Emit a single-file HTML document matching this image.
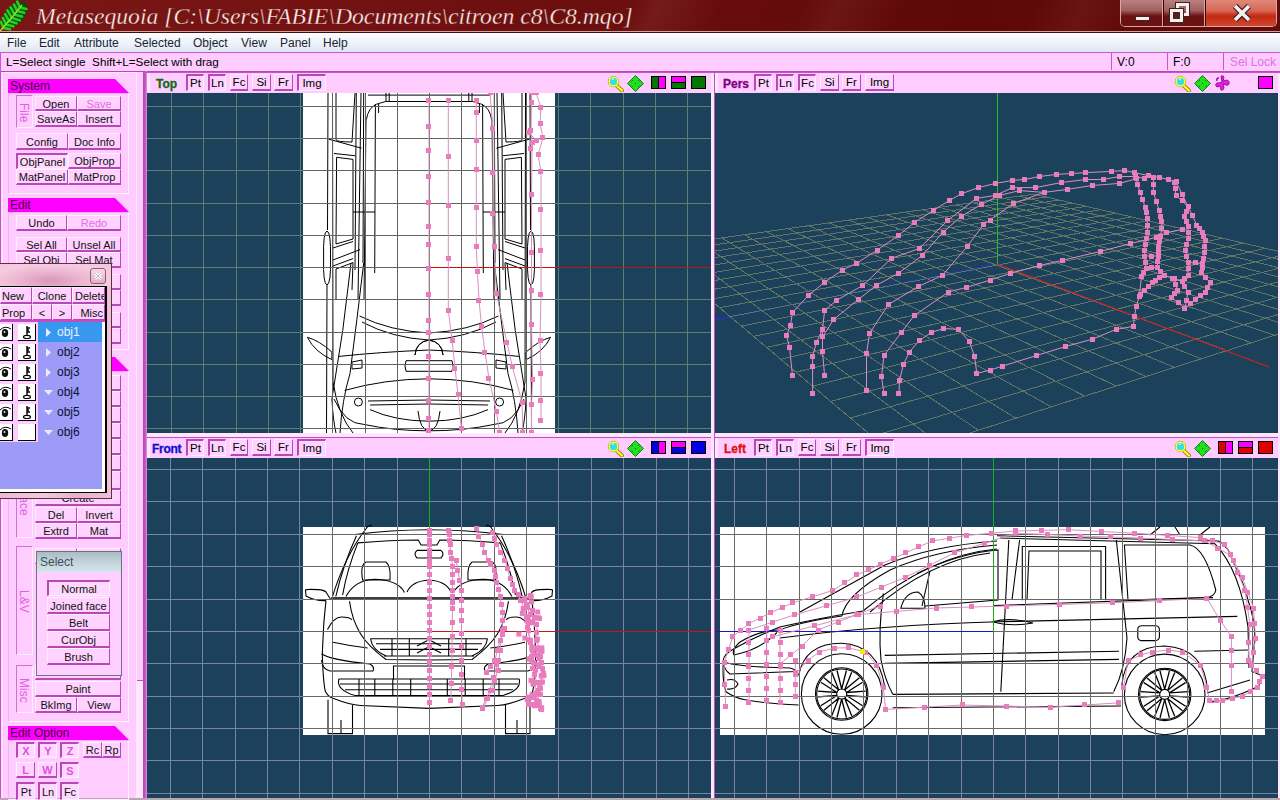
<!DOCTYPE html>
<html><head><meta charset="utf-8"><style>
*{box-sizing:border-box;margin:0;padding:0}
html,body{width:1280px;height:800px;overflow:hidden}
body{position:relative;background:#ffccff;font-family:"Liberation Sans",sans-serif;font-size:12px;color:#000}
.a{position:absolute}
.t{position:absolute;white-space:pre;line-height:1}
#title{left:0;top:0;width:1280px;height:31px;background:linear-gradient(115deg,rgba(255,255,255,0) 0%,rgba(255,255,255,0) 49%,rgba(255,200,200,.07) 51%,rgba(255,255,255,0) 56%,rgba(255,255,255,0) 62%,rgba(255,200,200,.06) 65%,rgba(255,255,255,0) 70%,rgba(255,255,255,0) 80%,rgba(255,200,200,.06) 84%,rgba(255,255,255,0) 88%),linear-gradient(100deg,#7a1616 0%,#741212 25%,#6a0e0e 50%,#5e0808 75%,#640a0a 100%);}
#menu{left:0;top:33px;width:1280px;height:19px;background:linear-gradient(#fdfdfe,#eef2f9 55%,#dfe6f1)}
#menu span{position:absolute;top:4px;font-size:12px;color:#1a2436;white-space:pre;line-height:1}
.b{position:absolute;padding-top:1px;background:#ffd2ff;border-top:1px solid #ffeeff;border-left:1px solid #ffeeff;border-right:1px solid #b848b8;border-bottom:2px solid #b848b8;text-align:center;font-size:11px;line-height:13px;white-space:pre;overflow:hidden;color:#111}
.bp{border-top:2px solid #b848b8;border-left:2px solid #b848b8;border-right:1px solid #ffeeff;border-bottom:1px solid #ffeeff;background:#ffd8ff}
.hd{position:absolute;height:14px;background:#ff00ff;color:#400040;font-size:12px;line-height:14px;padding-left:2px;white-space:pre}
.gb{position:absolute;border:1px solid #f4b0f4;border-right-color:#fff0ff;border-bottom-color:#fff0ff}
.lb{position:absolute;border-left:1px solid #d070d0;border-top:1px solid #d070d0;border-right:1px solid #ffeeff;border-bottom:1px solid #ffeeff}
.vl{position:absolute;color:#e060e0;font-size:12px;transform:rotate(90deg);transform-origin:0 0;white-space:pre;line-height:1}
.dark{position:absolute;background:#1b425a;overflow:hidden}
.vh{position:absolute;background:#ffccff}
.vb{position:absolute;background:#ffd2ff;border-top:1px solid #ffeeff;border-left:1px solid #ffeeff;border-right:1px solid #b848b8;border-bottom:2px solid #b848b8;font-size:11.5px;line-height:13px;text-align:center;white-space:pre}
.vbp{border-top:2px solid #b848b8;border-left:2px solid #b848b8;border-right:1px solid #ffeeff;border-bottom:1px solid #ffeeff}
.vt{position:absolute;font-weight:bold;font-size:13px;-webkit-text-stroke:0.3px;line-height:1;white-space:pre}
</style></head><body>
<div id="title" class="a">
<svg class="a" style="left:0;top:0" width="32" height="31" viewBox="0 0 32 31"><ellipse cx="15" cy="15" rx="16" ry="9" transform="rotate(-50 15 15)" fill="#0c4a10"/><path d="M3.5 27.9 Q2.0 24.1 0.8 21.8 M3.5 27.9 Q7.5 28.5 10.0 29.3 M6.2 24.5 Q4.4 20.5 3.0 18.0 M6.2 24.5 Q10.6 25.4 13.3 26.3 M9.0 21.1 Q6.8 16.8 5.2 14.2 M9.0 21.1 Q13.6 22.3 16.5 23.4 M11.7 17.7 Q9.2 13.2 7.4 10.4 M11.7 17.7 Q16.7 19.2 19.8 20.4 M14.4 14.4 Q12.3 10.0 10.6 7.4 M14.4 14.4 Q19.1 15.6 22.0 16.6 M17.2 11.0 Q15.3 6.9 13.9 4.5 M17.2 11.0 Q21.5 11.9 24.2 12.8 M19.9 7.6 Q18.4 3.8 17.2 1.6 M19.9 7.6 Q23.9 8.3 26.4 9.0" stroke="#22d022" stroke-width="2.6" stroke-linecap="round" fill="none"/><path d="M0 31 Q12 18 22 5" stroke="#90e020" stroke-width="1.6" fill="none"/></svg>
<div class="t" style="left:36px;top:2px;font-family:'Liberation Serif',serif;font-style:italic;font-size:23.7px;color:#fff4f0;line-height:28px;-webkit-text-stroke:0.35px #701212">Metasequoia [C:\Users\FABIE\Documents\citroen c8\C8.mqo]</div>
<div class="a" style="left:1120px;top:0;width:157px;height:27px;border:1px solid #d8a8a8;border-top:none;border-radius:0 0 5px 5px;overflow:hidden;background:#3a0000">
 <div class="a" style="left:0;top:0;width:42px;height:26px;background:linear-gradient(#b98080,#a06060 40%,#6a1010 62%,#6a1414);border-right:1px solid #d8a8a8"></div>
 <div class="a" style="left:43px;top:0;width:41px;height:26px;background:linear-gradient(#b98080,#a06060 40%,#6a1010 62%,#6a1414);border-right:1px solid #d8a8a8"></div>
 <div class="a" style="left:85px;top:0;width:71px;height:26px;background:linear-gradient(#e08878,#d86858 40%,#c42810 62%,#d04830)"></div>
 <div class="a" style="left:14px;top:16px;width:15px;height:5px;background:#f4eeee;border:1px solid #4a2020"></div>
 <div class="a" style="left:55px;top:3px;width:13px;height:13px;border:3px solid #f4f0f0;box-shadow:0 0 0 1px #402020"></div>
 <div class="a" style="left:49px;top:9px;width:13px;height:13px;border:3px solid #f4f0f0;background:#502020;box-shadow:0 0 0 1px #402020"></div>
 <svg class="a" style="left:110px;top:4px" width="22" height="18" viewBox="0 0 22 18"><path d="M4 2 L18 16 M18 2 L4 16" stroke="#3a2020" stroke-width="6"/><path d="M4 2 L18 16 M18 2 L4 16" stroke="#f4f0f0" stroke-width="3.6"/></svg>
</div>
</div>
<div class="a" style="left:0;top:31px;width:1280px;height:1px;background:#d8a0a0"></div><div class="a" style="left:0;top:32px;width:1280px;height:1px;background:#3a1010"></div>
<div id="menu" class="a">
<span style="left:7px">File</span><span style="left:39px">Edit</span><span style="left:74px">Attribute</span><span style="left:134px">Selected</span><span style="left:193px">Object</span><span style="left:241px">View</span><span style="left:280px">Panel</span><span style="left:323px">Help</span>
</div>
<div class="a" style="left:0;top:52px;width:1280px;height:1px;background:#cc55cc"></div>
<div class="a" style="left:0;top:53px;width:1280px;height:18px;background:#ffccff"></div>
<div class="a" style="left:0;top:52px;width:1px;height:20px;background:#cc55cc"></div>
<div class="t" style="left:6px;top:56px;font-size:11.7px">L=Select single  Shift+L=Select with drag</div>
<div class="a" style="left:1111px;top:53px;width:1px;height:17px;background:#cc55cc"></div>
<div class="a" style="left:1167px;top:53px;width:1px;height:17px;background:#cc55cc"></div>
<div class="a" style="left:1223px;top:53px;width:1px;height:17px;background:#cc55cc"></div>
<div class="t" style="left:1117px;top:56px">V:0</div>
<div class="t" style="left:1173px;top:56px">F:0</div>
<div class="t" style="left:1230px;top:56px;color:#e070e0">Sel Lock</div>
<div class="a" style="left:0;top:71px;width:1280px;height:1px;background:#b848b8"></div>
<div class="a" style="left:0;top:72px;width:136px;height:726px;background:#ffccff"></div>
<div class="a" style="left:0;top:71px;width:1px;height:727px;background:#c850c8"></div>
<div class="a" style="left:1px;top:72px;width:135px;height:1px;background:#ffe4ff"></div>
<div class="a" style="left:1px;top:72px;width:2px;height:726px;background:#ffe0ff"></div>
<div class="a" style="left:136px;top:72px;width:2px;height:726px;background:#ffe6ff"></div>
<div class="a" style="left:137px;top:72px;width:6px;height:726px;background:#ffccff"></div>
<div class="a" style="left:137px;top:681px;width:6px;height:117px;background:#ffe6ff"></div>
<div class="a" style="left:137px;top:680px;width:6px;height:1px;background:#c050c0"></div>
<div class="a" style="left:143px;top:71px;width:4px;height:727px;background:linear-gradient(90deg,#b848b8,#c050c0 50%,#e090e0)"></div>
<div class="a" style="left:0;top:798px;width:1280px;height:2px;background:#b8a8b0"></div>
<div class="hd" style="left:8px;top:79px;width:107px">System</div>
<svg class="a" style="left:115px;top:79px" width="14" height="14"><path d="M0 0 L0 14 L14 14 Z" fill="#ff00ff"/></svg>
<div class="gb" style="left:8px;top:93px;width:121px;height:101px"></div>
<div class="lb" style="left:16px;top:95px;width:17px;height:33px"></div>
<div class="vl" style="left:30px;top:103px">File</div>
<div class="b" style="left:35px;top:96px;width:42px;height:15px;line-height:12px;">Open</div>
<div class="b" style="left:77px;top:96px;width:44px;height:15px;line-height:12px;color:#e070e0;">Save</div>
<div class="b" style="left:35px;top:111px;width:42px;height:16px;line-height:13px;">SaveAs</div>
<div class="b" style="left:77px;top:111px;width:44px;height:16px;line-height:13px;">Insert</div>
<div class="b" style="left:16px;top:133px;width:52px;height:17px;line-height:14px;">Config</div>
<div class="b" style="left:68px;top:133px;width:53px;height:17px;line-height:14px;">Doc Info</div>
<div class="b bp" style="left:16px;top:153px;width:52px;height:16px;line-height:13px;">ObjPanel</div>
<div class="b" style="left:68px;top:153px;width:53px;height:16px;line-height:13px;">ObjProp</div>
<div class="b" style="left:16px;top:169px;width:52px;height:16px;line-height:13px;">MatPanel</div>
<div class="b" style="left:68px;top:169px;width:53px;height:16px;line-height:13px;">MatProp</div>
<div class="hd" style="left:8px;top:198px;width:107px">Edit</div>
<svg class="a" style="left:115px;top:198px" width="14" height="14"><path d="M0 0 L0 14 L14 14 Z" fill="#ff00ff"/></svg>
<div class="gb" style="left:8px;top:212px;width:121px;height:138px"></div>
<div class="b" style="left:16px;top:215px;width:51px;height:16px;line-height:13px;">Undo</div>
<div class="b" style="left:67px;top:215px;width:54px;height:16px;line-height:13px;color:#e070e0;">Redo</div>
<div class="b" style="left:16px;top:237px;width:51px;height:15px;line-height:12px;">Sel All</div>
<div class="b" style="left:67px;top:237px;width:54px;height:15px;line-height:12px;">Unsel All</div>
<div class="b" style="left:16px;top:252px;width:51px;height:16px;line-height:13px;">Sel Obj</div>
<div class="b" style="left:67px;top:252px;width:54px;height:16px;line-height:13px;">Sel Mat</div>
<div class="b" style="left:16px;top:274px;width:51px;height:16px;line-height:13px;"></div>
<div class="b" style="left:67px;top:274px;width:54px;height:16px;line-height:13px;"></div>
<div class="b" style="left:16px;top:290px;width:51px;height:16px;line-height:13px;"></div>
<div class="b" style="left:67px;top:290px;width:54px;height:16px;line-height:13px;"></div>
<div class="b" style="left:16px;top:312px;width:51px;height:16px;line-height:13px;"></div>
<div class="b" style="left:67px;top:312px;width:54px;height:16px;line-height:13px;"></div>
<div class="b" style="left:16px;top:328px;width:51px;height:16px;line-height:13px;"></div>
<div class="b" style="left:67px;top:328px;width:54px;height:16px;line-height:13px;"></div>
<div class="hd" style="left:8px;top:357px;width:107px">Command</div>
<svg class="a" style="left:115px;top:357px" width="14" height="14"><path d="M0 0 L0 14 L14 14 Z" fill="#ff00ff"/></svg>
<div class="gb" style="left:8px;top:371px;width:121px;height:351px"></div>
<div class="b" style="left:35px;top:375px;width:86px;height:16px;line-height:13px;"></div>
<div class="b" style="left:35px;top:391px;width:86px;height:16px;line-height:13px;"></div>
<div class="b" style="left:35px;top:407px;width:86px;height:16px;line-height:13px;"></div>
<div class="b" style="left:35px;top:423px;width:86px;height:16px;line-height:13px;"></div>
<div class="b" style="left:35px;top:439px;width:86px;height:16px;line-height:13px;"></div>
<div class="b" style="left:35px;top:455px;width:86px;height:16px;line-height:13px;"></div>
<div class="b" style="left:35px;top:471px;width:86px;height:19px;line-height:16px;"></div>
<div class="lb" style="left:16px;top:462px;width:17px;height:76px"></div>
<div class="vl" style="left:30px;top:489px">Face</div>
<div class="b" style="left:35px;top:490px;width:86px;height:16px;line-height:13px;">Create</div>
<div class="b" style="left:35px;top:507px;width:42px;height:16px;line-height:13px;">Del</div>
<div class="b" style="left:77px;top:507px;width:44px;height:16px;line-height:13px;">Invert</div>
<div class="b" style="left:35px;top:523px;width:42px;height:16px;line-height:13px;">Extrd</div>
<div class="b" style="left:77px;top:523px;width:44px;height:16px;line-height:13px;">Mat</div>
<div class="lb" style="left:16px;top:546px;width:17px;height:109px"></div>
<div class="vl" style="left:30px;top:590px">L&amp;V</div>
<div class="b" style="left:35px;top:548px;width:42px;height:16px;line-height:13px;">Belt</div>
<div class="b" style="left:77px;top:548px;width:44px;height:16px;line-height:13px;">Bevel</div>
<div class="b" style="left:35px;top:664px;width:86px;height:16px;line-height:13px;">Slice</div>
<div class="lb" style="left:16px;top:665px;width:17px;height:48px"></div>
<div class="vl" style="left:30px;top:678px">Misc</div>
<div class="b" style="left:35px;top:681px;width:86px;height:16px;line-height:13px;">Paint</div>
<div class="b" style="left:35px;top:697px;width:42px;height:16px;line-height:13px;">BkImg</div>
<div class="b" style="left:77px;top:697px;width:44px;height:16px;line-height:13px;">View</div>
<div class="hd" style="left:8px;top:726px;width:107px">Edit Option</div>
<svg class="a" style="left:115px;top:726px" width="14" height="14"><path d="M0 0 L0 14 L14 14 Z" fill="#ff00ff"/></svg>
<div class="gb" style="left:8px;top:740px;width:121px;height:60px"></div>
<div class="b bp" style="left:16px;top:742px;width:19px;height:16px;line-height:13px;color:#e050e0;font-weight:bold">X</div>
<div class="b bp" style="left:38px;top:742px;width:19px;height:16px;line-height:13px;color:#e050e0;font-weight:bold">Y</div>
<div class="b bp" style="left:60px;top:742px;width:19px;height:16px;line-height:13px;color:#e050e0;font-weight:bold">Z</div>
<div class="b" style="left:83px;top:742px;width:19px;height:16px;line-height:13px;">Rc</div>
<div class="b" style="left:102px;top:742px;width:19px;height:16px;line-height:13px;">Rp</div>
<div class="b" style="left:16px;top:762px;width:19px;height:16px;line-height:13px;color:#e050e0;font-weight:bold">L</div>
<div class="b" style="left:38px;top:762px;width:19px;height:16px;line-height:13px;color:#e050e0;font-weight:bold">W</div>
<div class="b bp" style="left:60px;top:762px;width:19px;height:16px;line-height:13px;color:#e050e0;font-weight:bold">S</div>
<div class="b bp" style="left:16px;top:782px;width:19px;height:18px;line-height:15px;">Pt</div>
<div class="b bp" style="left:38px;top:782px;width:19px;height:18px;line-height:15px;">Ln</div>
<div class="b bp" style="left:60px;top:782px;width:19px;height:18px;line-height:15px;">Fc</div><div class="a" style="left:147px;top:433px;width:1131px;height:4px;background:#ffe6ff"></div>
<div class="a" style="left:147px;top:437px;width:1133px;height:1px;background:#c050c0"></div>
<div class="a" style="left:711px;top:72px;width:3px;height:726px;background:#ffe6ff"></div>
<div class="a" style="left:714px;top:72px;width:1px;height:726px;background:#c050c0"></div>
<div class="a" style="left:1278px;top:72px;width:2px;height:726px;background:#ffe8ff"></div>
<div class="vh" style="left:147px;top:72px;width:564px;height:21px;background:#ffccff"></div>
<div class="a" style="left:147px;top:72px;width:3px;height:20px;background:#ffe6ff"></div>
<div class="vh" style="left:715px;top:72px;width:563px;height:21px;background:#ffccff"></div>
<div class="a" style="left:715px;top:72px;width:3px;height:20px;background:#ffe6ff"></div>
<div class="vh" style="left:147px;top:438px;width:564px;height:21px;background:#ffccff"></div>
<div class="a" style="left:147px;top:438px;width:3px;height:20px;background:#ffe6ff"></div>
<div class="vh" style="left:715px;top:438px;width:563px;height:21px;background:#ffccff"></div>
<div class="a" style="left:715px;top:438px;width:3px;height:20px;background:#ffe6ff"></div>
<div class="a" style="left:143px;top:72px;width:1137px;height:1px;background:#c058c0"></div>
<svg class="a" style="left:147px;top:93px" width="564" height="340"><g transform="translate(-147 -93)"><rect x="147" y="93" width="564" height="340" fill="#1b425a"/><rect x="303" y="93" width="252" height="340" fill="#fff"/><g fill="none" stroke="#000" stroke-width="1"><path d="M328 93 L327.5 230"/><path d="M327 285 L326.5 433"/><path d="M323.6 258 Q323 232 327 231 Q331 232 330.5 258 Q331 284 327 285 Q323 284 323.6 258"/><path d="M332.5 93 L333 382 Q338 415 353 433"/><path d="M336 93 L336 139.7 Q337 142 352 142 L355 93"/><path d="M328.7 139.2 L361.6 148.2"/><path d="M334 153.5 L355 155.7"/><path d="M336.6 157.3 L336 244 L353 239 L353 159.4 Z"/><path d="M333 248 L353 241.5"/><path d="M333 260 L360 249.6"/><path d="M333 266 L353 258.6"/><path d="M336 269 L353 262.6"/><path d="M336 269 L336 300"/><path d="M353 262.6 L352 290"/><path d="M356.3 93 L355 270"/><path d="M361 93 L358 300"/><path d="M363.7 93 L363 263"/><path d="M366 119.6 L364 300"/><path d="M366.4 119.6 Q368 108 376.5 104.2 L385.5 101.5 L429 101.5"/><path d="M375.4 104 L374.7 273"/><path d="M378.6 104 L378.6 113"/><path d="M368 95.1 L429 95.1"/><path d="M386 93 L386 101.5"/><path d="M389.2 93 L389.2 101.5"/><path d="M353 212 L375 212"/><path d="M359.5 316 Q390 331 429 333"/><path d="M362 322 Q392 338 429 340"/><path d="M351 263 Q344 330 331.9 399 Q333 420 336 433"/><path d="M363.7 263 Q357 320 350 373.5 Q342 400 340 433"/><path d="M307.4 337.3 Q319 340.5 331.9 352 L331.9 359.6 Q314.9 352.2 307.4 337.3"/><path d="M338 356.5 Q380 352 429 350"/><path d="M344.6 390.4 Q385 379 429 378.8"/><path d="M415 355 Q416 342 429 340 Q442 342 443 355"/><path d="M406 360.7 L429 360.7 M406 360.7 Q404 366 406 371.3 L429 371.3"/><path d="M352 362 L362 360 L362 368 L352 369 Z"/><path d="M354.4 402 A4 4 0 1 0 362.4 402 A4 4 0 1 0 354.4 402"/><path d="M368 401 L429 400"/><path d="M370 405 L429 404"/><path d="M334 399 Q345 424 363.7 424.4 Q395 431 429 430.8"/><path d="M370 409.6 Q395 421 429 421.2"/><path d="M418 411 Q420 430 429 431"/></g><g fill="none" stroke="#000" stroke-width="1" transform="matrix(-1 0 0 1 858 0)"><path d="M328 93 L327.5 230"/><path d="M327 285 L326.5 433"/><path d="M323.6 258 Q323 232 327 231 Q331 232 330.5 258 Q331 284 327 285 Q323 284 323.6 258"/><path d="M332.5 93 L333 382 Q338 415 353 433"/><path d="M336 93 L336 139.7 Q337 142 352 142 L355 93"/><path d="M328.7 139.2 L361.6 148.2"/><path d="M334 153.5 L355 155.7"/><path d="M336.6 157.3 L336 244 L353 239 L353 159.4 Z"/><path d="M333 248 L353 241.5"/><path d="M333 260 L360 249.6"/><path d="M333 266 L353 258.6"/><path d="M336 269 L353 262.6"/><path d="M336 269 L336 300"/><path d="M353 262.6 L352 290"/><path d="M356.3 93 L355 270"/><path d="M361 93 L358 300"/><path d="M363.7 93 L363 263"/><path d="M366 119.6 L364 300"/><path d="M366.4 119.6 Q368 108 376.5 104.2 L385.5 101.5 L429 101.5"/><path d="M375.4 104 L374.7 273"/><path d="M378.6 104 L378.6 113"/><path d="M368 95.1 L429 95.1"/><path d="M386 93 L386 101.5"/><path d="M389.2 93 L389.2 101.5"/><path d="M353 212 L375 212"/><path d="M359.5 316 Q390 331 429 333"/><path d="M362 322 Q392 338 429 340"/><path d="M351 263 Q344 330 331.9 399 Q333 420 336 433"/><path d="M363.7 263 Q357 320 350 373.5 Q342 400 340 433"/><path d="M307.4 337.3 Q319 340.5 331.9 352 L331.9 359.6 Q314.9 352.2 307.4 337.3"/><path d="M338 356.5 Q380 352 429 350"/><path d="M344.6 390.4 Q385 379 429 378.8"/><path d="M415 355 Q416 342 429 340 Q442 342 443 355"/><path d="M406 360.7 L429 360.7 M406 360.7 Q404 366 406 371.3 L429 371.3"/><path d="M352 362 L362 360 L362 368 L352 369 Z"/><path d="M354.4 402 A4 4 0 1 0 362.4 402 A4 4 0 1 0 354.4 402"/><path d="M368 401 L429 400"/><path d="M370 405 L429 404"/><path d="M334 399 Q345 424 363.7 424.4 Q395 431 429 430.8"/><path d="M370 409.6 Q395 421 429 421.2"/><path d="M418 411 Q420 430 429 431"/></g><defs><clipPath id="c14793"><path d="M147 93H711V433H147Z M303 93V433H555V93Z" clip-rule="evenodd"/></clipPath><clipPath id="c14793w"><rect x="303" y="93" width="252" height="340"/></clipPath></defs><path d="M171.5 93V433 M203.5 93V433 M236.5 93V433 M268.5 93V433 M147 106.5H711 M300.5 93V433 M147 138.5H711 M332.5 93V433 M147 170.5H711 M365.5 93V433 M147 203.5H711 M397.5 93V433 M147 235.5H711 M429.5 93V433 M147 267.5H711 M461.5 93V433 M147 299.5H711 M494.5 93V433 M147 332.5H711 M526.5 93V433 M147 364.5H711 M558.5 93V433 M147 396.5H711 M590.5 93V433 M147 428.5H711 M623.5 93V433 M655.5 93V433 M687.5 93V433" stroke="#5e7e74" stroke-width="1" fill="none" clip-path="url(#c14793)"/><path d="M171.5 93V433 M203.5 93V433 M236.5 93V433 M268.5 93V433 M147 106.5H711 M300.5 93V433 M147 138.5H711 M332.5 93V433 M147 170.5H711 M365.5 93V433 M147 203.5H711 M397.5 93V433 M147 235.5H711 M429.5 93V433 M147 267.5H711 M461.5 93V433 M147 299.5H711 M494.5 93V433 M147 332.5H711 M526.5 93V433 M147 364.5H711 M558.5 93V433 M147 396.5H711 M590.5 93V433 M147 428.5H711 M623.5 93V433 M655.5 93V433 M687.5 93V433" stroke="#5c665e" stroke-width="1" fill="none" clip-path="url(#c14793w)"/><path d="M429 267.5H711" stroke="#c01818" stroke-width="1"/><path d="M429.0 100.0 L429.0 127.0 L429.0 150.0 L429.0 176.0 L429.0 202.0 L429.0 226.0 L429.0 244.0 L429.0 268.0 L429.0 295.0 L429.0 320.0 L429.0 333.0 L429.0 356.0 L429.0 378.0 L429.0 401.0 L429.0 418.0 L429.0 431.0" fill="none" stroke="#d890c0" stroke-width="1"/><rect x="426" y="98" width="5" height="5" fill="#e87cbc"/><rect x="426" y="124" width="5" height="5" fill="#e87cbc"/><rect x="426" y="148" width="5" height="5" fill="#e87cbc"/><rect x="426" y="174" width="5" height="5" fill="#e87cbc"/><rect x="426" y="200" width="5" height="5" fill="#e87cbc"/><rect x="426" y="224" width="5" height="5" fill="#e87cbc"/><rect x="426" y="242" width="5" height="5" fill="#e87cbc"/><rect x="426" y="266" width="5" height="5" fill="#e87cbc"/><rect x="426" y="292" width="5" height="5" fill="#e87cbc"/><rect x="426" y="318" width="5" height="5" fill="#e87cbc"/><rect x="426" y="330" width="5" height="5" fill="#e87cbc"/><rect x="426" y="354" width="5" height="5" fill="#e87cbc"/><rect x="426" y="376" width="5" height="5" fill="#e87cbc"/><rect x="426" y="398" width="5" height="5" fill="#e87cbc"/><rect x="426" y="416" width="5" height="5" fill="#e87cbc"/><rect x="426" y="428" width="5" height="5" fill="#e87cbc"/><path d="M448.3 100.4 L448.3 156.3 L448.3 205.6 L448.3 258.0 L448.3 310.0 L452.0 340.0 L455.0 368.0 L458.0 395.0 L461.4 428.7" fill="none" stroke="#d890c0" stroke-width="1"/><rect x="446" y="98" width="5" height="5" fill="#e87cbc"/><rect x="446" y="154" width="5" height="5" fill="#e87cbc"/><rect x="446" y="203" width="5" height="5" fill="#e87cbc"/><rect x="446" y="256" width="5" height="5" fill="#e87cbc"/><rect x="446" y="308" width="5" height="5" fill="#e87cbc"/><rect x="450" y="338" width="5" height="5" fill="#e87cbc"/><rect x="452" y="366" width="5" height="5" fill="#e87cbc"/><rect x="456" y="392" width="5" height="5" fill="#e87cbc"/><rect x="459" y="426" width="5" height="5" fill="#e87cbc"/><path d="M476.3 100.0 L476.3 113.0 L476.3 140.8 L476.3 169.5 L476.3 207.3 L476.3 246.0 L477.4 271.5 L479.0 300.0 L481.6 326.7 L485.0 352.0 L489.0 378.8 L496.5 411.7 L499.7 433.0" fill="none" stroke="#d890c0" stroke-width="1"/><rect x="474" y="98" width="5" height="5" fill="#e87cbc"/><rect x="474" y="110" width="5" height="5" fill="#e87cbc"/><rect x="474" y="138" width="5" height="5" fill="#e87cbc"/><rect x="474" y="167" width="5" height="5" fill="#e87cbc"/><rect x="474" y="205" width="5" height="5" fill="#e87cbc"/><rect x="474" y="244" width="5" height="5" fill="#e87cbc"/><rect x="475" y="269" width="5" height="5" fill="#e87cbc"/><rect x="476" y="298" width="5" height="5" fill="#e87cbc"/><rect x="479" y="324" width="5" height="5" fill="#e87cbc"/><rect x="482" y="350" width="5" height="5" fill="#e87cbc"/><rect x="486" y="376" width="5" height="5" fill="#e87cbc"/><rect x="494" y="409" width="5" height="5" fill="#e87cbc"/><rect x="497" y="430" width="5" height="5" fill="#e87cbc"/><path d="M490.0 93.0 L492.9 128.0 L492.9 172.7 L493.0 213.6 L494.0 247.0 L496.5 293.8 L507.0 342.7 L512.4 367.0 L522.0 402.0 L523.0 433.0" fill="none" stroke="#d890c0" stroke-width="1"/><rect x="488" y="90" width="5" height="5" fill="#e87cbc"/><rect x="490" y="126" width="5" height="5" fill="#e87cbc"/><rect x="490" y="170" width="5" height="5" fill="#e87cbc"/><rect x="490" y="211" width="5" height="5" fill="#e87cbc"/><rect x="492" y="244" width="5" height="5" fill="#e87cbc"/><rect x="494" y="291" width="5" height="5" fill="#e87cbc"/><rect x="504" y="340" width="5" height="5" fill="#e87cbc"/><rect x="510" y="364" width="5" height="5" fill="#e87cbc"/><rect x="520" y="400" width="5" height="5" fill="#e87cbc"/><rect x="520" y="430" width="5" height="5" fill="#e87cbc"/><path d="M531.5 93.0 L531.5 102.0 L531.0 131.0 L532.0 143.0 L531.5 195.0 L531.5 252.0 L531.5 290.0 L531.5 324.6 L532.6 379.8 L531.5 405.0 L531.5 433.0" fill="none" stroke="#d890c0" stroke-width="1"/><rect x="529" y="90" width="5" height="5" fill="#e87cbc"/><rect x="529" y="100" width="5" height="5" fill="#e87cbc"/><rect x="528" y="128" width="5" height="5" fill="#e87cbc"/><rect x="530" y="140" width="5" height="5" fill="#e87cbc"/><rect x="529" y="192" width="5" height="5" fill="#e87cbc"/><rect x="529" y="250" width="5" height="5" fill="#e87cbc"/><rect x="529" y="288" width="5" height="5" fill="#e87cbc"/><rect x="529" y="322" width="5" height="5" fill="#e87cbc"/><rect x="530" y="377" width="5" height="5" fill="#e87cbc"/><rect x="529" y="402" width="5" height="5" fill="#e87cbc"/><rect x="529" y="430" width="5" height="5" fill="#e87cbc"/><path d="M536.0 93.0 L541.0 107.4 L540.0 123.4 L543.0 137.6 L538.0 155.0 L541.0 171.6 L541.0 209.4 L541.0 250.0 L541.0 294.9 L540.0 340.5 L541.0 373.5 L541.0 400.0 L541.0 420.0" fill="none" stroke="#d890c0" stroke-width="1"/><rect x="534" y="90" width="5" height="5" fill="#e87cbc"/><rect x="538" y="105" width="5" height="5" fill="#e87cbc"/><rect x="538" y="121" width="5" height="5" fill="#e87cbc"/><rect x="540" y="135" width="5" height="5" fill="#e87cbc"/><rect x="536" y="152" width="5" height="5" fill="#e87cbc"/><rect x="538" y="169" width="5" height="5" fill="#e87cbc"/><rect x="538" y="207" width="5" height="5" fill="#e87cbc"/><rect x="538" y="248" width="5" height="5" fill="#e87cbc"/><rect x="538" y="292" width="5" height="5" fill="#e87cbc"/><rect x="538" y="338" width="5" height="5" fill="#e87cbc"/><rect x="538" y="371" width="5" height="5" fill="#e87cbc"/><rect x="538" y="398" width="5" height="5" fill="#e87cbc"/><rect x="538" y="418" width="5" height="5" fill="#e87cbc"/><path d="M528.0 132.0 L536.0 140.0 L531.0 148.0" fill="none" stroke="#d890c0" stroke-width="1"/><rect x="526" y="130" width="5" height="5" fill="#e87cbc"/><rect x="534" y="138" width="5" height="5" fill="#e87cbc"/><rect x="528" y="146" width="5" height="5" fill="#e87cbc"/></g></svg>
<svg class="a" style="left:147px;top:458px" width="564" height="340"><g transform="translate(-147 -458)"><rect x="147" y="458" width="564" height="340" fill="#1b425a"/><rect x="303" y="527" width="252" height="208" fill="#fff"/><g fill="none" stroke="#000" stroke-width="1.1"><path d="M355 534.6 Q390 530 429 529.8"/><path d="M366 527 L372 525"/><path d="M357.8 542.9 Q390 540 418.3 540 L421 545 L429 545"/><path d="M417 550.4 L429 550.4 M417 550.4 Q413 554 417 558 L429 558"/><path d="M367.4 527 Q345 555 331.6 599.3"/><path d="M356.4 536 Q343 565 335.8 596.5"/><path d="M357.8 542.9 Q347 570 342.6 595"/><path d="M362.6 580 Q360 565 366 562 L386 562 Q391 566 390 580 Z"/><path d="M346 596.5 Q355 580 374.3 579.3 Q398 580 404.5 592.4"/><path d="M407 592 Q412 581 429 580"/><path d="M331.6 597.9 L429 597.9"/><path d="M331.6 599 L429 599"/><path d="M326 600.6 Q315 601 306 596 L305.5 590 Q306 589 318 589.6 Q324 590 326 592 L331 600"/><path d="M326 600.6 Q324 620 323.7 625 L322.3 653.8 Q323 680 325.2 691 Q328 697 333 698.3"/><path d="M349.5 601.3 Q352 620 360.5 633.7 Q368 646 386 659.5 L429 660"/><path d="M327.5 629.5 Q334 617 341.3 617 Q350 617 352 620"/><path d="M333 642.3 Q350 646 367.6 648"/><path d="M321.6 653.8 Q330 660 370 664 Q375 667 373 671 L330 671 Q322 669 321.6 660"/><path d="M370.5 638.7 L429 638.7"/><path d="M376 643.7 L429 643.7"/><path d="M380 649.4 L429 649.4"/><path d="M384 656 L429 656"/><path d="M370.5 638.7 Q372 650 386 656"/><path d="M392 638.7 V656"/><path d="M409.3 638.7 V656"/><path d="M417 646 L429.4 639.5"/><path d="M417 653 L429.4 646.5"/><path d="M393.5 679.6 V666 H429"/><path d="M338.8 679 L429 679"/><path d="M340 684 L429 684"/><path d="M345 689.7 L429 689.7"/><path d="M355 695.5 L429 695.5"/><path d="M338.8 679 Q336 690 355 695.5"/><path d="M359 679 V695"/><path d="M374.8 679 V695"/><path d="M392.8 679 V695"/><path d="M410.7 679 V695"/><path d="M333 698.3 Q350 705 360.4 705.5 L429 708.4"/><path d="M328 699.8 L328 733.6 L352.5 733.6 L352.5 705"/><path d="M341 720 V733"/></g><g fill="none" stroke="#000" stroke-width="1.1" transform="matrix(-1 0 0 1 858 0)"><path d="M355 534.6 Q390 530 429 529.8"/><path d="M366 527 L372 525"/><path d="M357.8 542.9 Q390 540 418.3 540 L421 545 L429 545"/><path d="M417 550.4 L429 550.4 M417 550.4 Q413 554 417 558 L429 558"/><path d="M367.4 527 Q345 555 331.6 599.3"/><path d="M356.4 536 Q343 565 335.8 596.5"/><path d="M357.8 542.9 Q347 570 342.6 595"/><path d="M362.6 580 Q360 565 366 562 L386 562 Q391 566 390 580 Z"/><path d="M346 596.5 Q355 580 374.3 579.3 Q398 580 404.5 592.4"/><path d="M407 592 Q412 581 429 580"/><path d="M331.6 597.9 L429 597.9"/><path d="M331.6 599 L429 599"/><path d="M326 600.6 Q315 601 306 596 L305.5 590 Q306 589 318 589.6 Q324 590 326 592 L331 600"/><path d="M326 600.6 Q324 620 323.7 625 L322.3 653.8 Q323 680 325.2 691 Q328 697 333 698.3"/><path d="M349.5 601.3 Q352 620 360.5 633.7 Q368 646 386 659.5 L429 660"/><path d="M327.5 629.5 Q334 617 341.3 617 Q350 617 352 620"/><path d="M333 642.3 Q350 646 367.6 648"/><path d="M321.6 653.8 Q330 660 370 664 Q375 667 373 671 L330 671 Q322 669 321.6 660"/><path d="M370.5 638.7 L429 638.7"/><path d="M376 643.7 L429 643.7"/><path d="M380 649.4 L429 649.4"/><path d="M384 656 L429 656"/><path d="M370.5 638.7 Q372 650 386 656"/><path d="M392 638.7 V656"/><path d="M409.3 638.7 V656"/><path d="M417 646 L429.4 639.5"/><path d="M417 653 L429.4 646.5"/><path d="M393.5 679.6 V666 H429"/><path d="M338.8 679 L429 679"/><path d="M340 684 L429 684"/><path d="M345 689.7 L429 689.7"/><path d="M355 695.5 L429 695.5"/><path d="M338.8 679 Q336 690 355 695.5"/><path d="M359 679 V695"/><path d="M374.8 679 V695"/><path d="M392.8 679 V695"/><path d="M410.7 679 V695"/><path d="M333 698.3 Q350 705 360.4 705.5 L429 708.4"/><path d="M328 699.8 L328 733.6 L352.5 733.6 L352.5 705"/><path d="M341 720 V733"/></g><defs><clipPath id="c147458"><path d="M147 458H711V798H147Z M303 527V735H555V527Z" clip-rule="evenodd"/></clipPath><clipPath id="c147458w"><rect x="303" y="527" width="252" height="208"/></clipPath></defs><path d="M170.5 458V798 M202.5 458V798 M235.5 458V798 M267.5 458V798 M147 469.5H711 M299.5 458V798 M147 501.5H711 M332.5 458V798 M147 534.5H711 M364.5 458V798 M147 566.5H711 M397.5 458V798 M147 599.5H711 M429.5 458V798 M147 631.5H711 M461.5 458V798 M147 663.5H711 M494.5 458V798 M147 696.5H711 M526.5 458V798 M147 728.5H711 M558.5 458V798 M147 760.5H711 M591.5 458V798 M147 793.5H711 M623.5 458V798 M656.5 458V798 M688.5 458V798" stroke="#7a84a2" stroke-width="1" fill="none" clip-path="url(#c147458)"/><path d="M170.5 458V798 M202.5 458V798 M235.5 458V798 M267.5 458V798 M147 469.5H711 M299.5 458V798 M147 501.5H711 M332.5 458V798 M147 534.5H711 M364.5 458V798 M147 566.5H711 M397.5 458V798 M147 599.5H711 M429.5 458V798 M147 631.5H711 M461.5 458V798 M147 663.5H711 M494.5 458V798 M147 696.5H711 M526.5 458V798 M147 728.5H711 M558.5 458V798 M147 760.5H711 M591.5 458V798 M147 793.5H711 M623.5 458V798 M656.5 458V798 M688.5 458V798" stroke="#686868" stroke-width="1" fill="none" clip-path="url(#c147458w)"/><path d="M429.5 458V631" stroke="#18b018" stroke-width="1"/><path d="M429 631.5H711" stroke="#c01818" stroke-width="1"/><path d="M429.4 530.0 L429.4 535.0 L429.4 540.0 L429.4 545.0 L429.4 550.0 L429.4 555.0 L429.4 560.0 L429.4 565.0 L429.4 566.0 L429.4 574.0 L429.4 582.0 L429.4 590.0 L429.4 598.0 L429.4 606.0 L429.4 614.0 L429.4 622.0 L429.4 630.0 L429.4 638.0 L429.4 646.0 L429.4 654.0 L429.4 662.0 L429.4 670.0 L429.4 678.0 L429.4 686.0 L429.4 694.0 L429.4 702.0" fill="none" stroke="#d890c0" stroke-width="1"/><rect x="427" y="528" width="5" height="5" fill="#e87cbc"/><rect x="427" y="532" width="5" height="5" fill="#e87cbc"/><rect x="427" y="538" width="5" height="5" fill="#e87cbc"/><rect x="427" y="542" width="5" height="5" fill="#e87cbc"/><rect x="427" y="548" width="5" height="5" fill="#e87cbc"/><rect x="427" y="552" width="5" height="5" fill="#e87cbc"/><rect x="427" y="558" width="5" height="5" fill="#e87cbc"/><rect x="427" y="562" width="5" height="5" fill="#e87cbc"/><rect x="427" y="564" width="5" height="5" fill="#e87cbc"/><rect x="427" y="572" width="5" height="5" fill="#e87cbc"/><rect x="427" y="580" width="5" height="5" fill="#e87cbc"/><rect x="427" y="588" width="5" height="5" fill="#e87cbc"/><rect x="427" y="596" width="5" height="5" fill="#e87cbc"/><rect x="427" y="604" width="5" height="5" fill="#e87cbc"/><rect x="427" y="612" width="5" height="5" fill="#e87cbc"/><rect x="427" y="620" width="5" height="5" fill="#e87cbc"/><rect x="427" y="628" width="5" height="5" fill="#e87cbc"/><rect x="427" y="636" width="5" height="5" fill="#e87cbc"/><rect x="427" y="644" width="5" height="5" fill="#e87cbc"/><rect x="427" y="652" width="5" height="5" fill="#e87cbc"/><rect x="427" y="660" width="5" height="5" fill="#e87cbc"/><rect x="427" y="668" width="5" height="5" fill="#e87cbc"/><rect x="427" y="676" width="5" height="5" fill="#e87cbc"/><rect x="427" y="684" width="5" height="5" fill="#e87cbc"/><rect x="427" y="692" width="5" height="5" fill="#e87cbc"/><rect x="427" y="700" width="5" height="5" fill="#e87cbc"/><path d="M448.8 530.0 L449.2 535.0 L449.6 540.0 L450.0 545.0 L450.8 552.0 L451.7 559.0 L452.5 566.0 L452.5 574.0 L452.5 582.0 L452.5 590.0 L452.5 596.0 L452.5 602.0 L452.5 608.0 L452.3 622.0 L452.2 636.0 L452.0 650.0 L451.7 666.7 L451.3 683.3 L451.0 700.0" fill="none" stroke="#d890c0" stroke-width="1"/><rect x="446" y="528" width="5" height="5" fill="#e87cbc"/><rect x="447" y="532" width="5" height="5" fill="#e87cbc"/><rect x="447" y="538" width="5" height="5" fill="#e87cbc"/><rect x="448" y="542" width="5" height="5" fill="#e87cbc"/><rect x="448" y="550" width="5" height="5" fill="#e87cbc"/><rect x="449" y="556" width="5" height="5" fill="#e87cbc"/><rect x="450" y="564" width="5" height="5" fill="#e87cbc"/><rect x="450" y="572" width="5" height="5" fill="#e87cbc"/><rect x="450" y="580" width="5" height="5" fill="#e87cbc"/><rect x="450" y="588" width="5" height="5" fill="#e87cbc"/><rect x="450" y="594" width="5" height="5" fill="#e87cbc"/><rect x="450" y="600" width="5" height="5" fill="#e87cbc"/><rect x="450" y="606" width="5" height="5" fill="#e87cbc"/><rect x="450" y="620" width="5" height="5" fill="#e87cbc"/><rect x="450" y="634" width="5" height="5" fill="#e87cbc"/><rect x="450" y="648" width="5" height="5" fill="#e87cbc"/><rect x="449" y="664" width="5" height="5" fill="#e87cbc"/><rect x="449" y="681" width="5" height="5" fill="#e87cbc"/><rect x="448" y="698" width="5" height="5" fill="#e87cbc"/><path d="M456.0 560.0 L457.8 570.0 L459.7 580.0 L461.5 590.0 L461.5 600.0 L461.5 610.0 L461.5 620.0 L461.5 633.3 L461.5 646.7 L461.5 660.0 L461.7 674.7 L461.8 689.3 L462.0 704.0" fill="none" stroke="#d890c0" stroke-width="1"/><rect x="454" y="558" width="5" height="5" fill="#e87cbc"/><rect x="455" y="568" width="5" height="5" fill="#e87cbc"/><rect x="457" y="578" width="5" height="5" fill="#e87cbc"/><rect x="459" y="588" width="5" height="5" fill="#e87cbc"/><rect x="459" y="598" width="5" height="5" fill="#e87cbc"/><rect x="459" y="608" width="5" height="5" fill="#e87cbc"/><rect x="459" y="618" width="5" height="5" fill="#e87cbc"/><rect x="459" y="631" width="5" height="5" fill="#e87cbc"/><rect x="459" y="644" width="5" height="5" fill="#e87cbc"/><rect x="459" y="658" width="5" height="5" fill="#e87cbc"/><rect x="459" y="672" width="5" height="5" fill="#e87cbc"/><rect x="459" y="687" width="5" height="5" fill="#e87cbc"/><rect x="460" y="702" width="5" height="5" fill="#e87cbc"/><path d="M476.0 528.0 L479.0 536.5 L482.0 545.0 L485.0 552.5 L488.0 560.0 L491.0 565.0 L494.0 570.0 L495.5 576.0 L497.0 582.0 L498.5 589.5 L500.0 597.0 L501.5 604.5 L503.0 612.0 L502.5 621.0 L502.0 630.0 L501.0 640.0 L500.0 650.0 L499.0 660.0 L498.0 670.0 L495.0 680.0 L492.0 690.0 L487.5 699.0 L483.0 708.0" fill="none" stroke="#d890c0" stroke-width="1"/><rect x="474" y="526" width="5" height="5" fill="#e87cbc"/><rect x="476" y="534" width="5" height="5" fill="#e87cbc"/><rect x="480" y="542" width="5" height="5" fill="#e87cbc"/><rect x="482" y="550" width="5" height="5" fill="#e87cbc"/><rect x="486" y="558" width="5" height="5" fill="#e87cbc"/><rect x="488" y="562" width="5" height="5" fill="#e87cbc"/><rect x="492" y="568" width="5" height="5" fill="#e87cbc"/><rect x="493" y="574" width="5" height="5" fill="#e87cbc"/><rect x="494" y="580" width="5" height="5" fill="#e87cbc"/><rect x="496" y="587" width="5" height="5" fill="#e87cbc"/><rect x="498" y="594" width="5" height="5" fill="#e87cbc"/><rect x="499" y="602" width="5" height="5" fill="#e87cbc"/><rect x="500" y="610" width="5" height="5" fill="#e87cbc"/><rect x="500" y="618" width="5" height="5" fill="#e87cbc"/><rect x="500" y="628" width="5" height="5" fill="#e87cbc"/><rect x="498" y="638" width="5" height="5" fill="#e87cbc"/><rect x="498" y="648" width="5" height="5" fill="#e87cbc"/><rect x="496" y="658" width="5" height="5" fill="#e87cbc"/><rect x="496" y="668" width="5" height="5" fill="#e87cbc"/><rect x="492" y="678" width="5" height="5" fill="#e87cbc"/><rect x="490" y="688" width="5" height="5" fill="#e87cbc"/><rect x="485" y="696" width="5" height="5" fill="#e87cbc"/><rect x="480" y="706" width="5" height="5" fill="#e87cbc"/><path d="M493.0 532.0 L495.0 538.5 L497.0 545.0 L501.0 552.5 L505.0 560.0 L507.5 569.0 L510.0 578.0 L512.5 584.0 L515.0 590.0 L518.0 595.0 L521.0 600.0 L524.0 608.5 L527.0 617.0 L528.5 630.0 L530.0 643.0 L531.5 656.0 L533.0 669.0 L534.5 682.0 L536.0 695.0 L538.0 701.5 L540.0 708.0" fill="none" stroke="#d890c0" stroke-width="1"/><rect x="490" y="530" width="5" height="5" fill="#e87cbc"/><rect x="492" y="536" width="5" height="5" fill="#e87cbc"/><rect x="494" y="542" width="5" height="5" fill="#e87cbc"/><rect x="498" y="550" width="5" height="5" fill="#e87cbc"/><rect x="502" y="558" width="5" height="5" fill="#e87cbc"/><rect x="505" y="566" width="5" height="5" fill="#e87cbc"/><rect x="508" y="576" width="5" height="5" fill="#e87cbc"/><rect x="510" y="582" width="5" height="5" fill="#e87cbc"/><rect x="512" y="588" width="5" height="5" fill="#e87cbc"/><rect x="516" y="592" width="5" height="5" fill="#e87cbc"/><rect x="518" y="598" width="5" height="5" fill="#e87cbc"/><rect x="522" y="606" width="5" height="5" fill="#e87cbc"/><rect x="524" y="614" width="5" height="5" fill="#e87cbc"/><rect x="526" y="628" width="5" height="5" fill="#e87cbc"/><rect x="528" y="640" width="5" height="5" fill="#e87cbc"/><rect x="529" y="654" width="5" height="5" fill="#e87cbc"/><rect x="530" y="666" width="5" height="5" fill="#e87cbc"/><rect x="532" y="680" width="5" height="5" fill="#e87cbc"/><rect x="534" y="692" width="5" height="5" fill="#e87cbc"/><rect x="536" y="699" width="5" height="5" fill="#e87cbc"/><rect x="538" y="706" width="5" height="5" fill="#e87cbc"/><path d="M520.0 600.0 L526.5 605.0 L533.0 610.0 L535.0 617.5 L537.0 625.0 L537.0 632.5 L537.0 640.0 L538.5 648.0 L540.0 656.0 L541.5 662.5 L543.0 669.0 L542.0 675.5 L541.0 682.0 L540.5 688.5 L540.0 695.0 L536.5 700.0 L533.0 705.0" fill="none" stroke="#d890c0" stroke-width="1"/><rect x="518" y="598" width="5" height="5" fill="#e87cbc"/><rect x="524" y="602" width="5" height="5" fill="#e87cbc"/><rect x="530" y="608" width="5" height="5" fill="#e87cbc"/><rect x="532" y="615" width="5" height="5" fill="#e87cbc"/><rect x="534" y="622" width="5" height="5" fill="#e87cbc"/><rect x="534" y="630" width="5" height="5" fill="#e87cbc"/><rect x="534" y="638" width="5" height="5" fill="#e87cbc"/><rect x="536" y="646" width="5" height="5" fill="#e87cbc"/><rect x="538" y="654" width="5" height="5" fill="#e87cbc"/><rect x="539" y="660" width="5" height="5" fill="#e87cbc"/><rect x="540" y="666" width="5" height="5" fill="#e87cbc"/><rect x="540" y="673" width="5" height="5" fill="#e87cbc"/><rect x="538" y="680" width="5" height="5" fill="#e87cbc"/><rect x="538" y="686" width="5" height="5" fill="#e87cbc"/><rect x="538" y="692" width="5" height="5" fill="#e87cbc"/><rect x="534" y="698" width="5" height="5" fill="#e87cbc"/><rect x="530" y="702" width="5" height="5" fill="#e87cbc"/><path d="M525.0 600.0 L527.5 607.5 L530.0 615.0 L529.0 622.5 L528.0 630.0 L530.0 640.0 L532.0 650.0 L533.5 662.5 L535.0 675.0 L536.5 682.5 L538.0 690.0 L533.0 697.5 L528.0 705.0" fill="none" stroke="#d890c0" stroke-width="1"/><rect x="522" y="598" width="5" height="5" fill="#e87cbc"/><rect x="525" y="605" width="5" height="5" fill="#e87cbc"/><rect x="528" y="612" width="5" height="5" fill="#e87cbc"/><rect x="526" y="620" width="5" height="5" fill="#e87cbc"/><rect x="526" y="628" width="5" height="5" fill="#e87cbc"/><rect x="528" y="638" width="5" height="5" fill="#e87cbc"/><rect x="530" y="648" width="5" height="5" fill="#e87cbc"/><rect x="531" y="660" width="5" height="5" fill="#e87cbc"/><rect x="532" y="672" width="5" height="5" fill="#e87cbc"/><rect x="534" y="680" width="5" height="5" fill="#e87cbc"/><rect x="536" y="688" width="5" height="5" fill="#e87cbc"/><rect x="530" y="695" width="5" height="5" fill="#e87cbc"/><rect x="526" y="702" width="5" height="5" fill="#e87cbc"/><path d="M486.0 672.0 L490.5 666.0 L495.0 660.0 L497.5 650.0 L500.0 640.0 L502.5 634.0 L505.0 628.0" fill="none" stroke="#d890c0" stroke-width="1"/><rect x="484" y="670" width="5" height="5" fill="#e87cbc"/><rect x="488" y="664" width="5" height="5" fill="#e87cbc"/><rect x="492" y="658" width="5" height="5" fill="#e87cbc"/><rect x="495" y="648" width="5" height="5" fill="#e87cbc"/><rect x="498" y="638" width="5" height="5" fill="#e87cbc"/><rect x="500" y="632" width="5" height="5" fill="#e87cbc"/><rect x="502" y="626" width="5" height="5" fill="#e87cbc"/><path d="M482.0 708.0 L486.0 699.0 L490.0 690.0 L493.5 677.5 L497.0 665.0" fill="none" stroke="#d890c0" stroke-width="1"/><rect x="480" y="706" width="5" height="5" fill="#e87cbc"/><rect x="484" y="696" width="5" height="5" fill="#e87cbc"/><rect x="488" y="688" width="5" height="5" fill="#e87cbc"/><rect x="491" y="675" width="5" height="5" fill="#e87cbc"/><rect x="494" y="662" width="5" height="5" fill="#e87cbc"/><rect x="528.5" y="677.9" width="5" height="5" fill="#e87cbc"/><rect x="530.8" y="681.8" width="5" height="5" fill="#e87cbc"/><rect x="535.1" y="646.8" width="5" height="5" fill="#e87cbc"/><rect x="524.7" y="696.9" width="5" height="5" fill="#e87cbc"/><rect x="528.9" y="657.7" width="5" height="5" fill="#e87cbc"/><rect x="541.4" y="673.1" width="5" height="5" fill="#e87cbc"/><rect x="538.7" y="673.5" width="5" height="5" fill="#e87cbc"/><rect x="535.4" y="652.3" width="5" height="5" fill="#e87cbc"/><rect x="535.3" y="698.9" width="5" height="5" fill="#e87cbc"/><rect x="533.4" y="690.7" width="5" height="5" fill="#e87cbc"/><rect x="535.9" y="646.7" width="5" height="5" fill="#e87cbc"/><rect x="537.4" y="680.9" width="5" height="5" fill="#e87cbc"/><rect x="529.6" y="644.5" width="5" height="5" fill="#e87cbc"/><rect x="539.2" y="673.2" width="5" height="5" fill="#e87cbc"/><rect x="536.7" y="699.6" width="5" height="5" fill="#e87cbc"/><rect x="536.6" y="702.4" width="5" height="5" fill="#e87cbc"/><rect x="531.2" y="694.6" width="5" height="5" fill="#e87cbc"/><rect x="532.1" y="703.3" width="5" height="5" fill="#e87cbc"/><rect x="539.4" y="648.8" width="5" height="5" fill="#e87cbc"/><rect x="526.8" y="656.6" width="5" height="5" fill="#e87cbc"/><rect x="540.9" y="670.9" width="5" height="5" fill="#e87cbc"/><rect x="535.2" y="662.1" width="5" height="5" fill="#e87cbc"/><rect x="533.1" y="667.6" width="5" height="5" fill="#e87cbc"/><rect x="530.5" y="680.5" width="5" height="5" fill="#e87cbc"/><rect x="534.4" y="701.3" width="5" height="5" fill="#e87cbc"/><rect x="536.1" y="702.9" width="5" height="5" fill="#e87cbc"/><rect x="539.1" y="706.9" width="5" height="5" fill="#e87cbc"/><rect x="535.9" y="653.1" width="5" height="5" fill="#e87cbc"/><rect x="539.1" y="705.2" width="5" height="5" fill="#e87cbc"/><rect x="539.9" y="679.5" width="5" height="5" fill="#e87cbc"/><rect x="536.6" y="656.2" width="5" height="5" fill="#e87cbc"/><rect x="538.6" y="679.8" width="5" height="5" fill="#e87cbc"/><rect x="529.3" y="646.6" width="5" height="5" fill="#e87cbc"/><rect x="539.0" y="706.8" width="5" height="5" fill="#e87cbc"/><rect x="526.0" y="694.5" width="5" height="5" fill="#e87cbc"/><rect x="531.5" y="652.3" width="5" height="5" fill="#e87cbc"/><rect x="529.5" y="692.5" width="5" height="5" fill="#e87cbc"/><rect x="539.3" y="645.4" width="5" height="5" fill="#e87cbc"/><rect x="534.9" y="645.4" width="5" height="5" fill="#e87cbc"/><rect x="536.7" y="664.0" width="5" height="5" fill="#e87cbc"/><rect x="534.9" y="636.6" width="5" height="5" fill="#e87cbc"/><rect x="526.6" y="637.4" width="5" height="5" fill="#e87cbc"/><rect x="522.3" y="596.0" width="5" height="5" fill="#e87cbc"/><rect x="528.7" y="593.9" width="5" height="5" fill="#e87cbc"/><rect x="519.8" y="610.9" width="5" height="5" fill="#e87cbc"/><rect x="528.9" y="599.5" width="5" height="5" fill="#e87cbc"/><rect x="516.4" y="631.6" width="5" height="5" fill="#e87cbc"/><rect x="522.4" y="635.6" width="5" height="5" fill="#e87cbc"/><rect x="535.2" y="609.5" width="5" height="5" fill="#e87cbc"/><rect x="525.6" y="615.9" width="5" height="5" fill="#e87cbc"/><rect x="529.7" y="619.3" width="5" height="5" fill="#e87cbc"/><rect x="527.8" y="620.4" width="5" height="5" fill="#e87cbc"/><rect x="536.2" y="615.3" width="5" height="5" fill="#e87cbc"/><rect x="525.0" y="624.9" width="5" height="5" fill="#e87cbc"/><rect x="520.7" y="606.0" width="5" height="5" fill="#e87cbc"/><rect x="537.0" y="616.0" width="5" height="5" fill="#e87cbc"/><rect x="527.6" y="593.0" width="5" height="5" fill="#e87cbc"/><rect x="524.6" y="618.6" width="5" height="5" fill="#e87cbc"/></g></svg>
<svg class="a" style="left:715px;top:458px" width="563" height="340"><g transform="translate(-715 -458)"><rect x="715" y="458" width="563" height="340" fill="#1b425a"/><rect x="720" y="527" width="545" height="208" fill="#fff"/><g fill="none" stroke="#000" stroke-width="1.1"><path d="M997 541 Q930 546 885 565 Q840 590 800 612"/><path d="M997 545 Q935 550 890 570 Q845 595 842 616"/><path d="M997 535.8 L1218.5 541 Q1230 548 1232 560 Q1245 585 1248 600 Q1255 620 1254.8 638 L1252 671.5 L1261.5 675.5 L1258.8 686.3 Q1230 700 1210 702.4"/><path d="M1000 538 L1215 543.8 Q1240 570 1248 627 L1249 668"/><path d="M997 549 Q930 555 863 611"/><path d="M990 553 Q930 560 870 612"/><path d="M863 611 Q820 618 779.8 627 Q755 637 734 648.7"/><path d="M842 616 Q800 622 780 629.8 Q760 630 740 642 Q731 650 734 655 Q760 650 777 632.5"/><path d="M734 648.7 Q722 655 723.4 662 Q722 680 726 691.7 Q735 698 745 699.7 Q770 704 798.6 705"/><path d="M723.4 662 Q740 667 790 668 Q797 670 796 671.5 L730 674 Q724 670 723.4 662"/><path d="M727 680 Q735 678 738 684 Q735 690 727 689"/><path d="M780 638 Q880 625 998 621.8 L1237.3 616.4"/><path d="M993 605.6 L1213 597.6"/><path d="M798.6 675.5 Q805 643 841.7 643.3 Q878 645 884.7 686.3"/><path d="M1121.7 686.3 Q1125 646 1164.7 646 Q1205 648 1207.7 691.7"/><path d="M883.4 593.4 Q878 630 881 660 Q885 680 892.7 694"/><path d="M1008.8 540 L1000.8 691.7"/><path d="M1019.6 540 L1012 600"/><path d="M1116.3 540 L1127 638 Q1125 670 1113.7 691.7"/><path d="M892.7 694.4 L1113.7 693"/><path d="M892.7 707.8 L1121 706"/><path d="M1207 693 L1250 680"/><path d="M1022.3 600.3 L1022.3 546.5 L1105.6 546.5 L1105.6 600.3"/><path d="M1027 600 L1029 551 L1101 551 L1101 600"/><path d="M1124.4 545 L1190 545 Q1205 548 1215.8 590 Q1215 597 1205 597.6 L1128 600 Z"/><path d="M917 573.4 Q960 553 998 550 L998 600 L925 606"/><path d="M930 571 L922 606"/><path d="M900.8 608.3 Q905 592 918 592 Q925 596 925 608.3 Z"/><path d="M992.7 621.8 Q1010 617 1033 623 Q1010 627 992.7 621.8"/><path d="M1137.8 629 Q1138 625.8 1142 625.8 L1156 625.8 Q1159.4 626 1159.4 630 L1159.4 637 Q1159 640.6 1155 640.6 L1141 640.6 Q1137.8 640 1137.8 637 Z"/><path d="M884.7 655.4 L1119 651.3"/><path d="M884.7 663.4 L1119 659.4"/><path d="M1194.3 651.3 L1248 650"/><path d="M1150 535 L1160 527 M1180 535 L1175 527 M1200 535 L1210 527"/><circle cx="841.7" cy="694" r="40.3"/><circle cx="841.7" cy="694" r="26.2"/><circle cx="841.7" cy="694" r="25"/><circle cx="841.7" cy="694" r="5"/><path d="M841.7 689.0L837.0 670.5M841.7 689.0L846.4 670.5M844.6 690.0L851.7 672.2M844.6 690.0L859.4 677.7M846.5 692.5L862.6 682.2M846.5 692.5L865.5 691.2M846.5 695.5L865.5 696.8M846.5 695.5L862.6 705.8M844.6 698.0L859.4 710.3M844.6 698.0L851.7 715.8M841.7 699.0L846.4 717.5M841.7 699.0L837.0 717.5M838.8 698.0L831.7 715.8M838.8 698.0L824.0 710.3M836.9 695.5L820.8 705.8M836.9 695.5L817.9 696.8M836.9 692.5L817.9 691.2M836.9 692.5L820.8 682.2M838.8 690.0L824.0 677.7M838.8 690.0L831.7 672.2" stroke-width="1.3"/><circle cx="1164.7" cy="694.4" r="40.3"/><circle cx="1164.7" cy="694.4" r="26.2"/><circle cx="1164.7" cy="694.4" r="25"/><circle cx="1164.7" cy="694.4" r="5"/><path d="M1164.7 689.4L1160.0 670.9M1164.7 689.4L1169.4 670.9M1167.6 690.4L1174.7 672.6M1167.6 690.4L1182.4 678.1M1169.5 692.9L1185.6 682.6M1169.5 692.9L1188.5 691.6M1169.5 695.9L1188.5 697.2M1169.5 695.9L1185.6 706.2M1167.6 698.4L1182.4 710.7M1167.6 698.4L1174.7 716.2M1164.7 699.4L1169.4 717.9M1164.7 699.4L1160.0 717.9M1161.8 698.4L1154.7 716.2M1161.8 698.4L1147.0 710.7M1159.9 695.9L1143.8 706.2M1159.9 695.9L1140.9 697.2M1159.9 692.9L1140.9 691.6M1159.9 692.9L1143.8 682.6M1161.8 690.4L1147.0 678.1M1161.8 690.4L1154.7 672.6" stroke-width="1.3"/></g><defs><clipPath id="c715458"><path d="M715 458H1278V798H715Z M720 527V735H1265V527Z" clip-rule="evenodd"/></clipPath><clipPath id="c715458w"><rect x="720" y="527" width="545" height="208"/></clipPath></defs><path d="M734.5 458V798 M766.5 458V798 M799.5 458V798 M831.5 458V798 M715 469.5H1278 M863.5 458V798 M715 501.5H1278 M896.5 458V798 M715 534.5H1278 M928.5 458V798 M715 566.5H1278 M961.5 458V798 M715 599.5H1278 M993.5 458V798 M715 631.5H1278 M1025.5 458V798 M715 663.5H1278 M1058.5 458V798 M715 696.5H1278 M1090.5 458V798 M715 728.5H1278 M1122.5 458V798 M715 760.5H1278 M1155.5 458V798 M715 793.5H1278 M1187.5 458V798 M1220.5 458V798 M1252.5 458V798" stroke="#7a84a2" stroke-width="1" fill="none" clip-path="url(#c715458)"/><path d="M734.5 458V798 M766.5 458V798 M799.5 458V798 M831.5 458V798 M715 469.5H1278 M863.5 458V798 M715 501.5H1278 M896.5 458V798 M715 534.5H1278 M928.5 458V798 M715 566.5H1278 M961.5 458V798 M715 599.5H1278 M993.5 458V798 M715 631.5H1278 M1025.5 458V798 M715 663.5H1278 M1058.5 458V798 M715 696.5H1278 M1090.5 458V798 M715 728.5H1278 M1122.5 458V798 M715 760.5H1278 M1155.5 458V798 M715 793.5H1278 M1187.5 458V798 M1220.5 458V798 M1252.5 458V798" stroke="#686868" stroke-width="1" fill="none" clip-path="url(#c715458w)"/><path d="M993.5 458V631" stroke="#18b018" stroke-width="1"/><path d="M715 631.5H993" stroke="#1818c0" stroke-width="1.2"/><path d="M725.7 707.0 L724.9 685.0 L724.0 663.0 L728.4 649.9 L732.7 636.7 L740.9 630.1 L749.0 623.5 L760.0 618.0 L771.0 612.5 L782.0 607.6 L793.0 602.8 L812.9 596.6 L832.7 590.5 L844.9 582.8 L857.0 575.0 L869.0 569.5 L881.0 564.0 L893.2 558.5 L905.4 553.0 L918.7 547.0 L932.0 541.0 L949.5 538.2 L967.0 535.4 L991.2 533.2 L1015.5 531.0 L1042.0 530.4 L1068.4 529.7 L1101.5 531.5 L1134.5 533.2 L1167.5 535.4 L1200.6 537.6 L1212.7 540.9 L1224.8 544.2 L1233.6 560.8 L1242.4 577.3 L1248.0 592.6 L1253.5 608.0 L1254.5 623.5 L1255.6 639.0 L1253.4 652.2 L1251.2 665.4 L1256.6 670.9 L1262.0 676.4 L1259.9 681.9 L1257.8 687.4 L1250.1 691.8 L1242.4 696.2 L1232.5 698.4 L1222.6 700.6 L1216.0 700.6 L1209.4 700.6" fill="none" stroke="#d890c0" stroke-width="1"/><rect x="723" y="704" width="5" height="5" fill="#e87cbc"/><rect x="722" y="682" width="5" height="5" fill="#e87cbc"/><rect x="722" y="660" width="5" height="5" fill="#e87cbc"/><rect x="726" y="647" width="5" height="5" fill="#e87cbc"/><rect x="730" y="634" width="5" height="5" fill="#e87cbc"/><rect x="738" y="628" width="5" height="5" fill="#e87cbc"/><rect x="746" y="621" width="5" height="5" fill="#e87cbc"/><rect x="758" y="616" width="5" height="5" fill="#e87cbc"/><rect x="768" y="610" width="5" height="5" fill="#e87cbc"/><rect x="780" y="605" width="5" height="5" fill="#e87cbc"/><rect x="790" y="600" width="5" height="5" fill="#e87cbc"/><rect x="810" y="594" width="5" height="5" fill="#e87cbc"/><rect x="830" y="588" width="5" height="5" fill="#e87cbc"/><rect x="842" y="580" width="5" height="5" fill="#e87cbc"/><rect x="854" y="572" width="5" height="5" fill="#e87cbc"/><rect x="866" y="567" width="5" height="5" fill="#e87cbc"/><rect x="878" y="562" width="5" height="5" fill="#e87cbc"/><rect x="891" y="556" width="5" height="5" fill="#e87cbc"/><rect x="903" y="550" width="5" height="5" fill="#e87cbc"/><rect x="916" y="544" width="5" height="5" fill="#e87cbc"/><rect x="930" y="538" width="5" height="5" fill="#e87cbc"/><rect x="947" y="536" width="5" height="5" fill="#e87cbc"/><rect x="964" y="533" width="5" height="5" fill="#e87cbc"/><rect x="989" y="531" width="5" height="5" fill="#e87cbc"/><rect x="1013" y="528" width="5" height="5" fill="#e87cbc"/><rect x="1039" y="528" width="5" height="5" fill="#e87cbc"/><rect x="1066" y="527" width="5" height="5" fill="#e87cbc"/><rect x="1099" y="529" width="5" height="5" fill="#e87cbc"/><rect x="1132" y="531" width="5" height="5" fill="#e87cbc"/><rect x="1165" y="533" width="5" height="5" fill="#e87cbc"/><rect x="1198" y="535" width="5" height="5" fill="#e87cbc"/><rect x="1210" y="538" width="5" height="5" fill="#e87cbc"/><rect x="1222" y="542" width="5" height="5" fill="#e87cbc"/><rect x="1231" y="558" width="5" height="5" fill="#e87cbc"/><rect x="1240" y="575" width="5" height="5" fill="#e87cbc"/><rect x="1245" y="590" width="5" height="5" fill="#e87cbc"/><rect x="1251" y="606" width="5" height="5" fill="#e87cbc"/><rect x="1252" y="621" width="5" height="5" fill="#e87cbc"/><rect x="1253" y="636" width="5" height="5" fill="#e87cbc"/><rect x="1251" y="650" width="5" height="5" fill="#e87cbc"/><rect x="1249" y="663" width="5" height="5" fill="#e87cbc"/><rect x="1254" y="668" width="5" height="5" fill="#e87cbc"/><rect x="1260" y="674" width="5" height="5" fill="#e87cbc"/><rect x="1257" y="679" width="5" height="5" fill="#e87cbc"/><rect x="1255" y="685" width="5" height="5" fill="#e87cbc"/><rect x="1248" y="689" width="5" height="5" fill="#e87cbc"/><rect x="1240" y="694" width="5" height="5" fill="#e87cbc"/><rect x="1230" y="696" width="5" height="5" fill="#e87cbc"/><rect x="1220" y="698" width="5" height="5" fill="#e87cbc"/><rect x="1214" y="698" width="5" height="5" fill="#e87cbc"/><rect x="1207" y="698" width="5" height="5" fill="#e87cbc"/><path d="M749.0 630.0 L772.0 622.4 L795.0 614.7 L826.0 605.9 L857.0 597.0 L881.2 587.1 L905.4 577.3 L929.7 565.1 L954.0 553.0 L984.8 543.1 L1015.5 533.2 L1047.8 534.6 L1080.0 536.0 L1110.0 537.0 L1140.0 538.0 L1172.5 539.5 L1205.0 541.0 L1217.5 548.0 L1230.0 555.0 L1237.5 572.5 L1245.0 590.0 L1247.5 607.5 L1250.0 625.0 L1249.0 642.5 L1248.0 660.0" fill="none" stroke="#d890c0" stroke-width="1"/><rect x="746" y="628" width="5" height="5" fill="#e87cbc"/><rect x="770" y="620" width="5" height="5" fill="#e87cbc"/><rect x="792" y="612" width="5" height="5" fill="#e87cbc"/><rect x="824" y="603" width="5" height="5" fill="#e87cbc"/><rect x="854" y="594" width="5" height="5" fill="#e87cbc"/><rect x="879" y="585" width="5" height="5" fill="#e87cbc"/><rect x="903" y="575" width="5" height="5" fill="#e87cbc"/><rect x="927" y="563" width="5" height="5" fill="#e87cbc"/><rect x="952" y="550" width="5" height="5" fill="#e87cbc"/><rect x="982" y="541" width="5" height="5" fill="#e87cbc"/><rect x="1013" y="531" width="5" height="5" fill="#e87cbc"/><rect x="1045" y="532" width="5" height="5" fill="#e87cbc"/><rect x="1078" y="534" width="5" height="5" fill="#e87cbc"/><rect x="1108" y="534" width="5" height="5" fill="#e87cbc"/><rect x="1138" y="536" width="5" height="5" fill="#e87cbc"/><rect x="1170" y="537" width="5" height="5" fill="#e87cbc"/><rect x="1202" y="538" width="5" height="5" fill="#e87cbc"/><rect x="1215" y="546" width="5" height="5" fill="#e87cbc"/><rect x="1228" y="552" width="5" height="5" fill="#e87cbc"/><rect x="1235" y="570" width="5" height="5" fill="#e87cbc"/><rect x="1242" y="588" width="5" height="5" fill="#e87cbc"/><rect x="1245" y="605" width="5" height="5" fill="#e87cbc"/><rect x="1248" y="622" width="5" height="5" fill="#e87cbc"/><rect x="1246" y="640" width="5" height="5" fill="#e87cbc"/><rect x="1246" y="658" width="5" height="5" fill="#e87cbc"/><path d="M773.0 636.7 L815.0 625.7 L857.0 614.7 L896.5 611.4 L936.0 608.0 L971.4 607.0 L1006.8 606.0 L1059.7 604.4 L1112.5 602.8 L1159.8 600.6 L1207.0 598.4" fill="none" stroke="#d890c0" stroke-width="1"/><rect x="770" y="634" width="5" height="5" fill="#e87cbc"/><rect x="812" y="623" width="5" height="5" fill="#e87cbc"/><rect x="854" y="612" width="5" height="5" fill="#e87cbc"/><rect x="894" y="609" width="5" height="5" fill="#e87cbc"/><rect x="934" y="606" width="5" height="5" fill="#e87cbc"/><rect x="969" y="604" width="5" height="5" fill="#e87cbc"/><rect x="1004" y="604" width="5" height="5" fill="#e87cbc"/><rect x="1057" y="602" width="5" height="5" fill="#e87cbc"/><rect x="1110" y="600" width="5" height="5" fill="#e87cbc"/><rect x="1157" y="598" width="5" height="5" fill="#e87cbc"/><rect x="1204" y="596" width="5" height="5" fill="#e87cbc"/><path d="M1207.0 598.4 L1220.0 620.0 L1231.4 636.7 L1231.4 650.0 L1231.4 665.4 L1231.4 691.8" fill="none" stroke="#d890c0" stroke-width="1"/><rect x="1204" y="596" width="5" height="5" fill="#e87cbc"/><rect x="1218" y="618" width="5" height="5" fill="#e87cbc"/><rect x="1229" y="634" width="5" height="5" fill="#e87cbc"/><rect x="1229" y="648" width="5" height="5" fill="#e87cbc"/><rect x="1229" y="663" width="5" height="5" fill="#e87cbc"/><rect x="1229" y="689" width="5" height="5" fill="#e87cbc"/><path d="M795.3 674.2 L808.0 660.0 L819.5 652.0 L834.0 648.0 L848.0 647.8 L865.8 652.0 L876.8 665.4 L883.4 687.4 L885.6 709.4" fill="none" stroke="#d890c0" stroke-width="1"/><rect x="793" y="672" width="5" height="5" fill="#e87cbc"/><rect x="806" y="658" width="5" height="5" fill="#e87cbc"/><rect x="817" y="650" width="5" height="5" fill="#e87cbc"/><rect x="832" y="646" width="5" height="5" fill="#e87cbc"/><rect x="846" y="645" width="5" height="5" fill="#e87cbc"/><rect x="863" y="650" width="5" height="5" fill="#e87cbc"/><rect x="874" y="663" width="5" height="5" fill="#e87cbc"/><rect x="881" y="685" width="5" height="5" fill="#e87cbc"/><rect x="883" y="707" width="5" height="5" fill="#e87cbc"/><path d="M885.6 709.4 L924.2 707.2 L962.7 705.0 L1006.8 706.1 L1050.8 707.2 L1084.9 705.0 L1119.0 702.8" fill="none" stroke="#d890c0" stroke-width="1"/><rect x="883" y="707" width="5" height="5" fill="#e87cbc"/><rect x="922" y="705" width="5" height="5" fill="#e87cbc"/><rect x="960" y="702" width="5" height="5" fill="#e87cbc"/><rect x="1004" y="704" width="5" height="5" fill="#e87cbc"/><rect x="1048" y="705" width="5" height="5" fill="#e87cbc"/><rect x="1082" y="702" width="5" height="5" fill="#e87cbc"/><rect x="1116" y="700" width="5" height="5" fill="#e87cbc"/><path d="M1123.5 687.4 L1128.0 661.0 L1140.0 655.0 L1152.0 652.0 L1168.0 650.0 L1183.0 652.0 L1200.6 665.4 L1207.0 687.4 L1209.4 700.6" fill="none" stroke="#d890c0" stroke-width="1"/><rect x="1121" y="685" width="5" height="5" fill="#e87cbc"/><rect x="1126" y="658" width="5" height="5" fill="#e87cbc"/><rect x="1138" y="652" width="5" height="5" fill="#e87cbc"/><rect x="1150" y="650" width="5" height="5" fill="#e87cbc"/><rect x="1166" y="648" width="5" height="5" fill="#e87cbc"/><rect x="1180" y="650" width="5" height="5" fill="#e87cbc"/><rect x="1198" y="663" width="5" height="5" fill="#e87cbc"/><rect x="1204" y="685" width="5" height="5" fill="#e87cbc"/><rect x="1207" y="698" width="5" height="5" fill="#e87cbc"/><path d="M749.0 630.0 L749.0 642.0 L749.0 654.0 L749.0 666.0 L749.0 678.0 L749.0 690.0 L749.0 702.0" fill="none" stroke="#d890c0" stroke-width="1"/><rect x="746" y="628" width="5" height="5" fill="#e87cbc"/><rect x="746" y="640" width="5" height="5" fill="#e87cbc"/><rect x="746" y="652" width="5" height="5" fill="#e87cbc"/><rect x="746" y="664" width="5" height="5" fill="#e87cbc"/><rect x="746" y="676" width="5" height="5" fill="#e87cbc"/><rect x="746" y="688" width="5" height="5" fill="#e87cbc"/><rect x="746" y="700" width="5" height="5" fill="#e87cbc"/><path d="M766.7 628.0 L766.7 640.0 L766.7 652.0 L766.7 664.0 L766.7 676.0 L766.7 688.0 L766.7 700.0" fill="none" stroke="#d890c0" stroke-width="1"/><rect x="764" y="626" width="5" height="5" fill="#e87cbc"/><rect x="764" y="638" width="5" height="5" fill="#e87cbc"/><rect x="764" y="650" width="5" height="5" fill="#e87cbc"/><rect x="764" y="662" width="5" height="5" fill="#e87cbc"/><rect x="764" y="674" width="5" height="5" fill="#e87cbc"/><rect x="764" y="686" width="5" height="5" fill="#e87cbc"/><rect x="764" y="698" width="5" height="5" fill="#e87cbc"/><path d="M780.0 630.0 L780.0 642.0 L780.0 654.0 L780.0 666.0 L780.0 678.0 L780.0 690.0 L780.0 702.0" fill="none" stroke="#d890c0" stroke-width="1"/><rect x="778" y="628" width="5" height="5" fill="#e87cbc"/><rect x="778" y="640" width="5" height="5" fill="#e87cbc"/><rect x="778" y="652" width="5" height="5" fill="#e87cbc"/><rect x="778" y="664" width="5" height="5" fill="#e87cbc"/><rect x="778" y="676" width="5" height="5" fill="#e87cbc"/><rect x="778" y="688" width="5" height="5" fill="#e87cbc"/><rect x="778" y="700" width="5" height="5" fill="#e87cbc"/><path d="M795.3 660.0 L795.3 672.0 L795.3 684.0 L795.3 696.0" fill="none" stroke="#d890c0" stroke-width="1"/><rect x="793" y="658" width="5" height="5" fill="#e87cbc"/><rect x="793" y="670" width="5" height="5" fill="#e87cbc"/><rect x="793" y="682" width="5" height="5" fill="#e87cbc"/><rect x="793" y="694" width="5" height="5" fill="#e87cbc"/><path d="M780.0 664.0 L791.0 655.0 L802.0 646.0 L818.0 630.0 L838.0 622.0 L858.0 614.0 L880.0 606.0" fill="none" stroke="#d890c0" stroke-width="1"/><rect x="778" y="662" width="5" height="5" fill="#e87cbc"/><rect x="788" y="652" width="5" height="5" fill="#e87cbc"/><rect x="800" y="644" width="5" height="5" fill="#e87cbc"/><rect x="816" y="628" width="5" height="5" fill="#e87cbc"/><rect x="836" y="620" width="5" height="5" fill="#e87cbc"/><rect x="856" y="612" width="5" height="5" fill="#e87cbc"/><rect x="878" y="604" width="5" height="5" fill="#e87cbc"/><rect x="860" y="649" width="5" height="5" fill="#f0f000"/></g></svg>
<svg class="a" style="left:715px;top:93px" width="563" height="340"><g transform="translate(-715 -93)"><rect x="715" y="93" width="563" height="340" fill="#1b425a"/><path d="M997 264 L714 320" stroke="#2434d0" stroke-width="1.2"/><path d="M1034.1 194.1L649.0 248.1M1034.1 194.1L1427.5 286.3M1046.4 197.0L655.2 253.4M1019.3 196.2L1411.1 291.5M1059.2 200.0L661.7 258.9M1004.1 198.3L1394.0 297.0M1072.5 203.1L668.6 264.7M988.6 200.5L1376.2 302.7M1086.3 206.3L675.9 270.9M972.7 202.7L1357.6 308.7M1100.8 209.7L683.6 277.4M956.3 205.0L1338.2 314.9M1115.9 213.3L691.8 284.3M939.6 207.3L1317.9 321.4M1131.7 216.9L700.5 291.6M922.4 209.8L1296.7 328.2M1148.2 220.8L709.8 299.4M904.7 212.2L1274.6 335.3M1165.4 224.9L719.6 307.7M886.6 214.8L1251.3 342.7M1183.5 229.1L730.2 316.6M867.9 217.4L1227.0 350.6M1202.5 233.5L741.5 326.2M848.8 220.1L1201.4 358.8M1222.5 238.2L753.6 336.4M829.1 222.9L1174.4 367.4M1243.4 243.1L766.6 347.4M808.8 225.7L1146.1 376.5M1265.5 248.3L780.7 359.3M788.0 228.6L1116.2 386.1M1288.9 253.8L796.0 372.1M766.5 231.6L1084.7 396.2M1313.5 259.5L812.5 386.1M744.4 234.7L1051.3 406.9M1339.5 265.6L830.6 401.4M721.7 237.9L1015.9 418.2M1367.1 272.1L850.4 418.0M698.2 241.2L978.4 430.2M1396.4 279.0L872.1 436.4M674.0 244.6L938.6 443.0M1427.5 286.3L896.1 456.6M649.0 248.1L896.1 456.6" stroke="#627464" stroke-width="1" fill="none" shape-rendering="crispEdges"/><path d="M997 264 L1269 367" stroke="#d02020" stroke-width="1.2"/><path d="M997.5 93 V264" stroke="#20c020" stroke-width="1"/><path d="M995.5 183.4 L978.4 187.6 L961.9 193.6 L949.3 200.5 L933.4 210.4 L914.5 222.4 L898.3 235.6 L877.3 250.0 L856.4 263.4 L842.0 270.3 L824.6 282.3 L808.4 295.5 L792.5 312.3 L790.4 325.5 L786.5 335.4 L789.5 347.4 L792.5 375.3" fill="none" stroke="#d890c0" stroke-width="1"/><rect x="993" y="181" width="5" height="5" fill="#e87cbc"/><rect x="976" y="185" width="5" height="5" fill="#e87cbc"/><rect x="959" y="191" width="5" height="5" fill="#e87cbc"/><rect x="947" y="198" width="5" height="5" fill="#e87cbc"/><rect x="931" y="208" width="5" height="5" fill="#e87cbc"/><rect x="912" y="220" width="5" height="5" fill="#e87cbc"/><rect x="896" y="233" width="5" height="5" fill="#e87cbc"/><rect x="875" y="248" width="5" height="5" fill="#e87cbc"/><rect x="854" y="261" width="5" height="5" fill="#e87cbc"/><rect x="840" y="268" width="5" height="5" fill="#e87cbc"/><rect x="822" y="280" width="5" height="5" fill="#e87cbc"/><rect x="806" y="293" width="5" height="5" fill="#e87cbc"/><rect x="790" y="310" width="5" height="5" fill="#e87cbc"/><rect x="788" y="323" width="5" height="5" fill="#e87cbc"/><rect x="784" y="333" width="5" height="5" fill="#e87cbc"/><rect x="787" y="345" width="5" height="5" fill="#e87cbc"/><rect x="790" y="373" width="5" height="5" fill="#e87cbc"/><path d="M995.5 195.4 L976.3 198.4 L947.5 220.6 L919.3 248.5 L891.4 258.4 L863.0 285.3 L836.6 300.3 L824.6 310.5 L822.5 329.4 L816.5 342.3 L812.6 356.4 L812.6 366.3 L812.6 393.3" fill="none" stroke="#d890c0" stroke-width="1"/><rect x="993" y="193" width="5" height="5" fill="#e87cbc"/><rect x="974" y="196" width="5" height="5" fill="#e87cbc"/><rect x="945" y="218" width="5" height="5" fill="#e87cbc"/><rect x="917" y="246" width="5" height="5" fill="#e87cbc"/><rect x="889" y="256" width="5" height="5" fill="#e87cbc"/><rect x="860" y="283" width="5" height="5" fill="#e87cbc"/><rect x="834" y="298" width="5" height="5" fill="#e87cbc"/><rect x="822" y="308" width="5" height="5" fill="#e87cbc"/><rect x="820" y="327" width="5" height="5" fill="#e87cbc"/><rect x="814" y="340" width="5" height="5" fill="#e87cbc"/><rect x="810" y="354" width="5" height="5" fill="#e87cbc"/><rect x="810" y="364" width="5" height="5" fill="#e87cbc"/><rect x="810" y="391" width="5" height="5" fill="#e87cbc"/><path d="M822.5 329.4 L822.5 337.0 L822.5 351.3 L824.6 375.9" fill="none" stroke="#d890c0" stroke-width="1"/><rect x="820" y="327" width="5" height="5" fill="#e87cbc"/><rect x="820" y="334" width="5" height="5" fill="#e87cbc"/><rect x="820" y="349" width="5" height="5" fill="#e87cbc"/><rect x="822" y="373" width="5" height="5" fill="#e87cbc"/><path d="M981.4 204.4 L961.3 216.4 L943.3 232.0 L922.3 255.4 L898.3 273.3 L876.4 285.3 L858.5 299.4 L833.6 319.5 L822.5 337.0" fill="none" stroke="#d890c0" stroke-width="1"/><rect x="979" y="202" width="5" height="5" fill="#e87cbc"/><rect x="959" y="214" width="5" height="5" fill="#e87cbc"/><rect x="941" y="230" width="5" height="5" fill="#e87cbc"/><rect x="920" y="253" width="5" height="5" fill="#e87cbc"/><rect x="896" y="271" width="5" height="5" fill="#e87cbc"/><rect x="874" y="283" width="5" height="5" fill="#e87cbc"/><rect x="856" y="297" width="5" height="5" fill="#e87cbc"/><rect x="831" y="317" width="5" height="5" fill="#e87cbc"/><rect x="820" y="334" width="5" height="5" fill="#e87cbc"/><path d="M983.5 224.5 L967.3 246.4 L942.4 275.4 L918.4 286.5 L888.4 304.5 L869.6 333.3 L866.5 353.4 L866.5 390.3" fill="none" stroke="#d890c0" stroke-width="1"/><rect x="981" y="222" width="5" height="5" fill="#e87cbc"/><rect x="965" y="244" width="5" height="5" fill="#e87cbc"/><rect x="940" y="273" width="5" height="5" fill="#e87cbc"/><rect x="916" y="284" width="5" height="5" fill="#e87cbc"/><rect x="886" y="302" width="5" height="5" fill="#e87cbc"/><rect x="867" y="331" width="5" height="5" fill="#e87cbc"/><rect x="864" y="351" width="5" height="5" fill="#e87cbc"/><rect x="864" y="388" width="5" height="5" fill="#e87cbc"/><path d="M1182.0 229.6 L1167.0 232.6 L1156.4 237.4 L1131.0 243.4 L1100.3 251.5 L1062.0 260.4 L1039.5 265.5 L1010.4 273.3 L990.4 280.0 L966.4 287.4 L948.4 292.0 L914.5 315.3 L901.3 332.4 L884.0 355.5 L881.5 376.5 L884.0 393.9" fill="none" stroke="#d890c0" stroke-width="1"/><rect x="1180" y="227" width="5" height="5" fill="#e87cbc"/><rect x="1164" y="230" width="5" height="5" fill="#e87cbc"/><rect x="1154" y="235" width="5" height="5" fill="#e87cbc"/><rect x="1128" y="241" width="5" height="5" fill="#e87cbc"/><rect x="1098" y="249" width="5" height="5" fill="#e87cbc"/><rect x="1060" y="258" width="5" height="5" fill="#e87cbc"/><rect x="1037" y="263" width="5" height="5" fill="#e87cbc"/><rect x="1008" y="271" width="5" height="5" fill="#e87cbc"/><rect x="988" y="278" width="5" height="5" fill="#e87cbc"/><rect x="964" y="285" width="5" height="5" fill="#e87cbc"/><rect x="946" y="290" width="5" height="5" fill="#e87cbc"/><rect x="912" y="313" width="5" height="5" fill="#e87cbc"/><rect x="899" y="330" width="5" height="5" fill="#e87cbc"/><rect x="882" y="353" width="5" height="5" fill="#e87cbc"/><rect x="879" y="374" width="5" height="5" fill="#e87cbc"/><rect x="882" y="391" width="5" height="5" fill="#e87cbc"/><path d="M899.0 393.9 L899.5 380.4 L903.4 364.5 L909.4 352.0 L919.3 340.5 L931.3 332.4 L943.9 328.5 L958.3 329.4 L969.4 341.4 L974.5 356.4 L976.9 373.5 L990.0 370.0 L1002.0 366.3 L1036.5 355.5 L1065.6 346.5 L1092.0 339.3 L1116.0 329.4 L1133.3 326.4 L1134.5 316.0 L1136.3 306.3 L1139.3 296.4 L1141.4 277.0" fill="none" stroke="#d890c0" stroke-width="1"/><rect x="896" y="391" width="5" height="5" fill="#e87cbc"/><rect x="897" y="378" width="5" height="5" fill="#e87cbc"/><rect x="901" y="362" width="5" height="5" fill="#e87cbc"/><rect x="907" y="350" width="5" height="5" fill="#e87cbc"/><rect x="917" y="338" width="5" height="5" fill="#e87cbc"/><rect x="929" y="330" width="5" height="5" fill="#e87cbc"/><rect x="941" y="326" width="5" height="5" fill="#e87cbc"/><rect x="956" y="327" width="5" height="5" fill="#e87cbc"/><rect x="967" y="339" width="5" height="5" fill="#e87cbc"/><rect x="972" y="354" width="5" height="5" fill="#e87cbc"/><rect x="974" y="371" width="5" height="5" fill="#e87cbc"/><rect x="988" y="368" width="5" height="5" fill="#e87cbc"/><rect x="1000" y="364" width="5" height="5" fill="#e87cbc"/><rect x="1034" y="353" width="5" height="5" fill="#e87cbc"/><rect x="1063" y="344" width="5" height="5" fill="#e87cbc"/><rect x="1090" y="337" width="5" height="5" fill="#e87cbc"/><rect x="1114" y="327" width="5" height="5" fill="#e87cbc"/><rect x="1131" y="324" width="5" height="5" fill="#e87cbc"/><rect x="1132" y="314" width="5" height="5" fill="#e87cbc"/><rect x="1134" y="304" width="5" height="5" fill="#e87cbc"/><rect x="1137" y="294" width="5" height="5" fill="#e87cbc"/><rect x="1139" y="274" width="5" height="5" fill="#e87cbc"/><path d="M995.5 183.4 L1012.5 180.4 L1024.5 179.5 L1039.5 176.5 L1056.6 174.4 L1071.6 173.5 L1085.4 172.6 L1111.4 171.4 L1125.0 170.5 L1134.0 172.6 L1149.0 175.6 L1159.4 177.4 L1168.4 179.5 L1176.0 181.6" fill="none" stroke="#d890c0" stroke-width="1"/><rect x="993" y="181" width="5" height="5" fill="#e87cbc"/><rect x="1010" y="178" width="5" height="5" fill="#e87cbc"/><rect x="1022" y="177" width="5" height="5" fill="#e87cbc"/><rect x="1037" y="174" width="5" height="5" fill="#e87cbc"/><rect x="1054" y="172" width="5" height="5" fill="#e87cbc"/><rect x="1069" y="171" width="5" height="5" fill="#e87cbc"/><rect x="1083" y="170" width="5" height="5" fill="#e87cbc"/><rect x="1109" y="169" width="5" height="5" fill="#e87cbc"/><rect x="1122" y="168" width="5" height="5" fill="#e87cbc"/><rect x="1132" y="170" width="5" height="5" fill="#e87cbc"/><rect x="1146" y="173" width="5" height="5" fill="#e87cbc"/><rect x="1157" y="175" width="5" height="5" fill="#e87cbc"/><rect x="1166" y="177" width="5" height="5" fill="#e87cbc"/><rect x="1174" y="179" width="5" height="5" fill="#e87cbc"/><path d="M995.5 195.4 L1012.5 187.6 L1035.6 187.6 L1061.4 182.5 L1085.4 179.5 L1103.3 179.5 L1119.5 176.5 L1135.4 176.5 L1144.4 178.6" fill="none" stroke="#d890c0" stroke-width="1"/><rect x="993" y="193" width="5" height="5" fill="#e87cbc"/><rect x="1010" y="185" width="5" height="5" fill="#e87cbc"/><rect x="1033" y="185" width="5" height="5" fill="#e87cbc"/><rect x="1059" y="180" width="5" height="5" fill="#e87cbc"/><rect x="1083" y="177" width="5" height="5" fill="#e87cbc"/><rect x="1101" y="177" width="5" height="5" fill="#e87cbc"/><rect x="1117" y="174" width="5" height="5" fill="#e87cbc"/><rect x="1133" y="174" width="5" height="5" fill="#e87cbc"/><rect x="1142" y="176" width="5" height="5" fill="#e87cbc"/><path d="M981.4 204.4 L999.6 195.4 L1019.4 190.6 L1044.0 192.4 L1067.4 189.4 L1092.0 185.5 L1119.5 183.4 L1137.0 178.6" fill="none" stroke="#d890c0" stroke-width="1"/><rect x="979" y="202" width="5" height="5" fill="#e87cbc"/><rect x="997" y="193" width="5" height="5" fill="#e87cbc"/><rect x="1017" y="188" width="5" height="5" fill="#e87cbc"/><rect x="1042" y="190" width="5" height="5" fill="#e87cbc"/><rect x="1065" y="187" width="5" height="5" fill="#e87cbc"/><rect x="1090" y="183" width="5" height="5" fill="#e87cbc"/><rect x="1117" y="181" width="5" height="5" fill="#e87cbc"/><rect x="1134" y="176" width="5" height="5" fill="#e87cbc"/><path d="M983.5 224.5 L990.0 220.0 L1013.4 203.5 L1044.0 192.4" fill="none" stroke="#d890c0" stroke-width="1"/><rect x="981" y="222" width="5" height="5" fill="#e87cbc"/><rect x="988" y="218" width="5" height="5" fill="#e87cbc"/><rect x="1011" y="201" width="5" height="5" fill="#e87cbc"/><rect x="1042" y="190" width="5" height="5" fill="#e87cbc"/><path d="M1135.4 175.6 L1137.7 184.0 L1140.0 192.4 L1142.7 199.9 L1145.3 207.4 L1146.3 212.9 L1147.4 218.5 L1147.4 225.2 L1147.4 232.0 L1146.3 238.0 L1145.3 244.0 L1144.8 250.0 L1144.4 256.0 L1145.2 262.0 L1146.0 268.0 L1143.7 272.5 L1141.4 277.0" fill="none" stroke="#d890c0" stroke-width="1"/><rect x="1133" y="173" width="5" height="5" fill="#e87cbc"/><rect x="1135" y="182" width="5" height="5" fill="#e87cbc"/><rect x="1138" y="190" width="5" height="5" fill="#e87cbc"/><rect x="1140" y="197" width="5" height="5" fill="#e87cbc"/><rect x="1143" y="205" width="5" height="5" fill="#e87cbc"/><rect x="1144" y="210" width="5" height="5" fill="#e87cbc"/><rect x="1145" y="216" width="5" height="5" fill="#e87cbc"/><rect x="1145" y="223" width="5" height="5" fill="#e87cbc"/><rect x="1145" y="230" width="5" height="5" fill="#e87cbc"/><rect x="1144" y="236" width="5" height="5" fill="#e87cbc"/><rect x="1143" y="242" width="5" height="5" fill="#e87cbc"/><rect x="1142" y="248" width="5" height="5" fill="#e87cbc"/><rect x="1142" y="254" width="5" height="5" fill="#e87cbc"/><rect x="1143" y="260" width="5" height="5" fill="#e87cbc"/><rect x="1144" y="266" width="5" height="5" fill="#e87cbc"/><rect x="1141" y="270" width="5" height="5" fill="#e87cbc"/><rect x="1139" y="274" width="5" height="5" fill="#e87cbc"/><path d="M1153.4 177.4 L1153.4 184.9 L1153.4 192.4 L1156.4 201.7 L1159.4 211.0 L1160.5 216.2 L1161.5 221.5 L1161.2 229.0 L1161.0 236.5 L1159.8 241.8 L1158.5 247.0 L1158.2 251.5 L1158.0 256.0 L1157.7 261.6 L1157.3 267.3 L1160.7 271.4 L1164.0 275.4 L1159.8 277.7 L1155.5 280.0 L1152.2 283.0 L1149.0 286.0 L1144.5 290.5 L1140.0 295.0" fill="none" stroke="#d890c0" stroke-width="1"/><rect x="1151" y="175" width="5" height="5" fill="#e87cbc"/><rect x="1151" y="182" width="5" height="5" fill="#e87cbc"/><rect x="1151" y="190" width="5" height="5" fill="#e87cbc"/><rect x="1154" y="199" width="5" height="5" fill="#e87cbc"/><rect x="1157" y="208" width="5" height="5" fill="#e87cbc"/><rect x="1158" y="214" width="5" height="5" fill="#e87cbc"/><rect x="1159" y="219" width="5" height="5" fill="#e87cbc"/><rect x="1159" y="226" width="5" height="5" fill="#e87cbc"/><rect x="1158" y="234" width="5" height="5" fill="#e87cbc"/><rect x="1157" y="239" width="5" height="5" fill="#e87cbc"/><rect x="1156" y="244" width="5" height="5" fill="#e87cbc"/><rect x="1156" y="249" width="5" height="5" fill="#e87cbc"/><rect x="1156" y="254" width="5" height="5" fill="#e87cbc"/><rect x="1155" y="259" width="5" height="5" fill="#e87cbc"/><rect x="1155" y="265" width="5" height="5" fill="#e87cbc"/><rect x="1158" y="269" width="5" height="5" fill="#e87cbc"/><rect x="1162" y="273" width="5" height="5" fill="#e87cbc"/><rect x="1157" y="275" width="5" height="5" fill="#e87cbc"/><rect x="1153" y="278" width="5" height="5" fill="#e87cbc"/><rect x="1150" y="280" width="5" height="5" fill="#e87cbc"/><rect x="1146" y="284" width="5" height="5" fill="#e87cbc"/><rect x="1142" y="288" width="5" height="5" fill="#e87cbc"/><rect x="1138" y="292" width="5" height="5" fill="#e87cbc"/><path d="M1174.4 182.5 L1175.2 188.9 L1176.0 195.4 L1182.0 200.9 L1188.0 206.5 L1186.2 211.8 L1184.3 217.0 L1186.2 221.5 L1188.0 226.0 L1188.2 232.3 L1188.5 238.6 L1187.0 244.3 L1185.5 250.0 L1186.8 256.0 L1188.0 262.0 L1188.0 268.7 L1188.0 275.4 L1185.0 278.4 L1182.0 281.4 L1185.0 286.7 L1188.0 292.0 L1186.5 300.2 L1185.0 308.4" fill="none" stroke="#d890c0" stroke-width="1"/><rect x="1172" y="180" width="5" height="5" fill="#e87cbc"/><rect x="1173" y="186" width="5" height="5" fill="#e87cbc"/><rect x="1174" y="193" width="5" height="5" fill="#e87cbc"/><rect x="1180" y="198" width="5" height="5" fill="#e87cbc"/><rect x="1186" y="204" width="5" height="5" fill="#e87cbc"/><rect x="1184" y="209" width="5" height="5" fill="#e87cbc"/><rect x="1182" y="214" width="5" height="5" fill="#e87cbc"/><rect x="1184" y="219" width="5" height="5" fill="#e87cbc"/><rect x="1186" y="224" width="5" height="5" fill="#e87cbc"/><rect x="1186" y="230" width="5" height="5" fill="#e87cbc"/><rect x="1186" y="236" width="5" height="5" fill="#e87cbc"/><rect x="1184" y="242" width="5" height="5" fill="#e87cbc"/><rect x="1183" y="248" width="5" height="5" fill="#e87cbc"/><rect x="1184" y="254" width="5" height="5" fill="#e87cbc"/><rect x="1186" y="260" width="5" height="5" fill="#e87cbc"/><rect x="1186" y="266" width="5" height="5" fill="#e87cbc"/><rect x="1186" y="273" width="5" height="5" fill="#e87cbc"/><rect x="1182" y="276" width="5" height="5" fill="#e87cbc"/><rect x="1180" y="279" width="5" height="5" fill="#e87cbc"/><rect x="1182" y="284" width="5" height="5" fill="#e87cbc"/><rect x="1186" y="290" width="5" height="5" fill="#e87cbc"/><rect x="1184" y="298" width="5" height="5" fill="#e87cbc"/><rect x="1182" y="306" width="5" height="5" fill="#e87cbc"/><path d="M1176.0 181.6 L1182.0 194.1 L1188.0 206.5 L1192.5 215.9 L1197.0 225.4 L1199.7 228.7 L1202.3 232.0 L1203.8 236.2 L1205.3 240.4 L1204.8 246.7 L1204.4 253.0 L1203.7 258.2 L1203.0 263.4 L1202.2 267.9 L1201.4 272.4 L1205.9 277.7 L1210.4 283.0 L1207.8 287.5 L1205.3 292.0 L1200.3 295.7 L1195.4 299.4 L1190.2 303.9 L1185.0 308.4 L1178.2 302.9 L1171.4 297.3 L1174.4 293.9 L1177.4 290.4 L1175.9 284.4 L1174.4 278.4" fill="none" stroke="#d890c0" stroke-width="1"/><rect x="1174" y="179" width="5" height="5" fill="#e87cbc"/><rect x="1180" y="192" width="5" height="5" fill="#e87cbc"/><rect x="1186" y="204" width="5" height="5" fill="#e87cbc"/><rect x="1190" y="213" width="5" height="5" fill="#e87cbc"/><rect x="1194" y="223" width="5" height="5" fill="#e87cbc"/><rect x="1197" y="226" width="5" height="5" fill="#e87cbc"/><rect x="1200" y="230" width="5" height="5" fill="#e87cbc"/><rect x="1201" y="234" width="5" height="5" fill="#e87cbc"/><rect x="1203" y="238" width="5" height="5" fill="#e87cbc"/><rect x="1202" y="244" width="5" height="5" fill="#e87cbc"/><rect x="1202" y="250" width="5" height="5" fill="#e87cbc"/><rect x="1201" y="256" width="5" height="5" fill="#e87cbc"/><rect x="1200" y="261" width="5" height="5" fill="#e87cbc"/><rect x="1200" y="265" width="5" height="5" fill="#e87cbc"/><rect x="1199" y="270" width="5" height="5" fill="#e87cbc"/><rect x="1203" y="275" width="5" height="5" fill="#e87cbc"/><rect x="1208" y="280" width="5" height="5" fill="#e87cbc"/><rect x="1205" y="285" width="5" height="5" fill="#e87cbc"/><rect x="1203" y="290" width="5" height="5" fill="#e87cbc"/><rect x="1198" y="293" width="5" height="5" fill="#e87cbc"/><rect x="1193" y="297" width="5" height="5" fill="#e87cbc"/><rect x="1188" y="301" width="5" height="5" fill="#e87cbc"/><rect x="1182" y="306" width="5" height="5" fill="#e87cbc"/><rect x="1176" y="300" width="5" height="5" fill="#e87cbc"/><rect x="1169" y="295" width="5" height="5" fill="#e87cbc"/><rect x="1172" y="291" width="5" height="5" fill="#e87cbc"/><rect x="1175" y="288" width="5" height="5" fill="#e87cbc"/><rect x="1173" y="282" width="5" height="5" fill="#e87cbc"/><rect x="1172" y="276" width="5" height="5" fill="#e87cbc"/><path d="M1144.4 256.0 L1151.2 256.0 L1158.0 256.0" fill="none" stroke="#d890c0" stroke-width="1"/><rect x="1142" y="254" width="5" height="5" fill="#e87cbc"/><rect x="1149" y="254" width="5" height="5" fill="#e87cbc"/><rect x="1156" y="254" width="5" height="5" fill="#e87cbc"/><path d="M1146.0 268.0 L1151.7 267.6 L1157.3 267.3" fill="none" stroke="#d890c0" stroke-width="1"/><rect x="1144" y="266" width="5" height="5" fill="#e87cbc"/><rect x="1149" y="265" width="5" height="5" fill="#e87cbc"/><rect x="1155" y="265" width="5" height="5" fill="#e87cbc"/><path d="M1182.0 281.4 L1173.0 278.4 L1164.0 275.4" fill="none" stroke="#d890c0" stroke-width="1"/><rect x="1180" y="279" width="5" height="5" fill="#e87cbc"/><rect x="1170" y="276" width="5" height="5" fill="#e87cbc"/><rect x="1162" y="273" width="5" height="5" fill="#e87cbc"/><path d="M1188.0 262.0 L1195.5 262.7 L1203.0 263.4" fill="none" stroke="#d890c0" stroke-width="1"/><rect x="1186" y="260" width="5" height="5" fill="#e87cbc"/><rect x="1193" y="260" width="5" height="5" fill="#e87cbc"/><rect x="1200" y="261" width="5" height="5" fill="#e87cbc"/></g></svg>
<div class="vt" style="left:156px;top:78px;color:#106a10;font-size:12px;letter-spacing:0px">Top</div>
<div class="vb vbp" style="left:186px;top:74px;width:18px;height:17px;line-height:14px">Pt</div>
<div class="vb vbp" style="left:208px;top:74px;width:18px;height:17px;line-height:14px">Ln</div>
<div class="vb" style="left:230px;top:74px;width:18px;height:17px;line-height:14px">Fc</div>
<div class="vb" style="left:252px;top:74px;width:19px;height:17px;line-height:14px">Si</div>
<div class="vb" style="left:274px;top:74px;width:19px;height:17px;line-height:14px">Fr</div>
<div class="vb vbp" style="left:297px;top:74px;width:29px;height:17px;line-height:14px">Img</div>
<svg class="a" style="left:607px;top:75px" width="17" height="17" viewBox="0 0 17 17"><path d="M9.5 10.5 L15 15.5" stroke="#a08000" stroke-width="4" stroke-linecap="round"/><path d="M9.5 10.5 L15 15.5" stroke="#ffff30" stroke-width="2.2" stroke-linecap="round"/><circle cx="6.5" cy="6.5" r="5.2" fill="#30e8f0" stroke="#a08000" stroke-width="1"/><circle cx="6.5" cy="6.5" r="4.4" fill="none" stroke="#ffff30" stroke-width="1.6"/><circle cx="6.5" cy="6.5" r="3.5" fill="#30e0f0"/><path d="M5 4.5 Q6 3.8 7 4" stroke="#e0ffff" stroke-width="1" fill="none"/></svg>
<svg class="a" style="left:627px;top:75px" width="17" height="17" viewBox="0 0 17 17"><path d="M8.5 0.5 L16.5 8.5 L8.5 16.5 L0.5 8.5 Z" fill="#20e020" stroke="#108010" stroke-width="1"/><g fill="none" stroke="#108010" stroke-width="0.9"><path d="M6 5 l-1.5 1.5 M11 5 l1.5 1.5 M6 12 l-1.5 -1.5 M11 12 l1.5 -1.5"/></g><circle cx="8.5" cy="8.5" r="0.8" fill="#108010"/></svg>
<svg class="a" style="left:651px;top:76px" width="15" height="13"><rect width="15" height="13" fill="#000"/><rect x="1" y="1" width="6" height="11" fill="#007800"/><rect x="7" y="1" width="1" height="11" fill="#000"/><rect x="8" y="1" width="6" height="11" fill="#ff00ff"/></svg>
<svg class="a" style="left:671px;top:76px" width="15" height="13"><rect width="15" height="13" fill="#000"/><rect x="1" y="1" width="13" height="5" fill="#ff00ff"/><rect x="1" y="6" width="13" height="1" fill="#000"/><rect x="1" y="7" width="13" height="5" fill="#007800"/></svg>
<svg class="a" style="left:691px;top:76px" width="15" height="13"><rect width="15" height="13" fill="#000"/><rect x="1" y="1" width="13" height="11" fill="#007800"/></svg>
<div class="vt" style="left:723px;top:78px;color:#800080;font-size:12px;letter-spacing:0px">Pers</div>
<div class="vb vbp" style="left:754px;top:74px;width:18px;height:17px;line-height:14px">Pt</div>
<div class="vb vbp" style="left:776px;top:74px;width:18px;height:17px;line-height:14px">Ln</div>
<div class="vb vbp" style="left:798px;top:74px;width:18px;height:17px;line-height:14px">Fc</div>
<div class="vb" style="left:820px;top:74px;width:19px;height:17px;line-height:14px">Si</div>
<div class="vb" style="left:842px;top:74px;width:19px;height:17px;line-height:14px">Fr</div>
<div class="vb" style="left:865px;top:74px;width:29px;height:17px;line-height:14px">Img</div>
<svg class="a" style="left:1174px;top:75px" width="17" height="17" viewBox="0 0 17 17"><path d="M9.5 10.5 L15 15.5" stroke="#a08000" stroke-width="4" stroke-linecap="round"/><path d="M9.5 10.5 L15 15.5" stroke="#ffff30" stroke-width="2.2" stroke-linecap="round"/><circle cx="6.5" cy="6.5" r="5.2" fill="#30e8f0" stroke="#a08000" stroke-width="1"/><circle cx="6.5" cy="6.5" r="4.4" fill="none" stroke="#ffff30" stroke-width="1.6"/><circle cx="6.5" cy="6.5" r="3.5" fill="#30e0f0"/><path d="M5 4.5 Q6 3.8 7 4" stroke="#e0ffff" stroke-width="1" fill="none"/></svg>
<svg class="a" style="left:1194px;top:75px" width="17" height="17" viewBox="0 0 17 17"><path d="M8.5 0.5 L16.5 8.5 L8.5 16.5 L0.5 8.5 Z" fill="#20e020" stroke="#108010" stroke-width="1"/><g fill="none" stroke="#108010" stroke-width="0.9"><path d="M6 5 l-1.5 1.5 M11 5 l1.5 1.5 M6 12 l-1.5 -1.5 M11 12 l1.5 -1.5"/></g><circle cx="8.5" cy="8.5" r="0.8" fill="#108010"/></svg>
<svg class="a" style="left:1214px;top:75px" width="17" height="17" viewBox="0 0 17 17"><path d="M7 1 Q10 0 10 3 L9 6 L13 5 Q16 6 15 9 Q14 11 12 10 L9 9 L10 13 Q9 16 7 15 L6 11 L3 12 Q1 11 2 9 Q3 7 5 8 L8 7 Z" fill="#e020e0" stroke="#a010a0" stroke-width="1"/><path d="M3 6 Q2 3 5 3" fill="none" stroke="#a010a0" stroke-width="1.5"/></svg>
<svg class="a" style="left:1258px;top:76px" width="15" height="13"><rect width="15" height="13" fill="#000"/><rect x="1" y="1" width="13" height="11" fill="#ff00ff"/></svg>
<div class="vt" style="left:152px;top:443px;color:#1010c8;font-size:12px;letter-spacing:-0.3px">Front</div>
<div class="vb vbp" style="left:186px;top:439px;width:18px;height:17px;line-height:14px">Pt</div>
<div class="vb vbp" style="left:208px;top:439px;width:18px;height:17px;line-height:14px">Ln</div>
<div class="vb" style="left:230px;top:439px;width:18px;height:17px;line-height:14px">Fc</div>
<div class="vb" style="left:252px;top:439px;width:19px;height:17px;line-height:14px">Si</div>
<div class="vb" style="left:274px;top:439px;width:19px;height:17px;line-height:14px">Fr</div>
<div class="vb vbp" style="left:297px;top:439px;width:29px;height:17px;line-height:14px">Img</div>
<svg class="a" style="left:607px;top:440px" width="17" height="17" viewBox="0 0 17 17"><path d="M9.5 10.5 L15 15.5" stroke="#a08000" stroke-width="4" stroke-linecap="round"/><path d="M9.5 10.5 L15 15.5" stroke="#ffff30" stroke-width="2.2" stroke-linecap="round"/><circle cx="6.5" cy="6.5" r="5.2" fill="#30e8f0" stroke="#a08000" stroke-width="1"/><circle cx="6.5" cy="6.5" r="4.4" fill="none" stroke="#ffff30" stroke-width="1.6"/><circle cx="6.5" cy="6.5" r="3.5" fill="#30e0f0"/><path d="M5 4.5 Q6 3.8 7 4" stroke="#e0ffff" stroke-width="1" fill="none"/></svg>
<svg class="a" style="left:627px;top:440px" width="17" height="17" viewBox="0 0 17 17"><path d="M8.5 0.5 L16.5 8.5 L8.5 16.5 L0.5 8.5 Z" fill="#20e020" stroke="#108010" stroke-width="1"/><g fill="none" stroke="#108010" stroke-width="0.9"><path d="M6 5 l-1.5 1.5 M11 5 l1.5 1.5 M6 12 l-1.5 -1.5 M11 12 l1.5 -1.5"/></g><circle cx="8.5" cy="8.5" r="0.8" fill="#108010"/></svg>
<svg class="a" style="left:651px;top:441px" width="15" height="13"><rect width="15" height="13" fill="#000"/><rect x="1" y="1" width="6" height="11" fill="#0000e0"/><rect x="7" y="1" width="1" height="11" fill="#000"/><rect x="8" y="1" width="6" height="11" fill="#ff00ff"/></svg>
<svg class="a" style="left:671px;top:441px" width="15" height="13"><rect width="15" height="13" fill="#000"/><rect x="1" y="1" width="13" height="5" fill="#ff00ff"/><rect x="1" y="6" width="13" height="1" fill="#000"/><rect x="1" y="7" width="13" height="5" fill="#0000e0"/></svg>
<svg class="a" style="left:691px;top:441px" width="15" height="13"><rect width="15" height="13" fill="#000"/><rect x="1" y="1" width="13" height="11" fill="#0000e0"/></svg>
<div class="vt" style="left:724px;top:443px;color:#e01010;font-size:12px;letter-spacing:0px">Left</div>
<div class="vb vbp" style="left:754px;top:439px;width:18px;height:17px;line-height:14px">Pt</div>
<div class="vb vbp" style="left:776px;top:439px;width:18px;height:17px;line-height:14px">Ln</div>
<div class="vb" style="left:798px;top:439px;width:18px;height:17px;line-height:14px">Fc</div>
<div class="vb" style="left:820px;top:439px;width:19px;height:17px;line-height:14px">Si</div>
<div class="vb" style="left:842px;top:439px;width:19px;height:17px;line-height:14px">Fr</div>
<div class="vb vbp" style="left:865px;top:439px;width:29px;height:17px;line-height:14px">Img</div>
<svg class="a" style="left:1174px;top:440px" width="17" height="17" viewBox="0 0 17 17"><path d="M9.5 10.5 L15 15.5" stroke="#a08000" stroke-width="4" stroke-linecap="round"/><path d="M9.5 10.5 L15 15.5" stroke="#ffff30" stroke-width="2.2" stroke-linecap="round"/><circle cx="6.5" cy="6.5" r="5.2" fill="#30e8f0" stroke="#a08000" stroke-width="1"/><circle cx="6.5" cy="6.5" r="4.4" fill="none" stroke="#ffff30" stroke-width="1.6"/><circle cx="6.5" cy="6.5" r="3.5" fill="#30e0f0"/><path d="M5 4.5 Q6 3.8 7 4" stroke="#e0ffff" stroke-width="1" fill="none"/></svg>
<svg class="a" style="left:1194px;top:440px" width="17" height="17" viewBox="0 0 17 17"><path d="M8.5 0.5 L16.5 8.5 L8.5 16.5 L0.5 8.5 Z" fill="#20e020" stroke="#108010" stroke-width="1"/><g fill="none" stroke="#108010" stroke-width="0.9"><path d="M6 5 l-1.5 1.5 M11 5 l1.5 1.5 M6 12 l-1.5 -1.5 M11 12 l1.5 -1.5"/></g><circle cx="8.5" cy="8.5" r="0.8" fill="#108010"/></svg>
<svg class="a" style="left:1218px;top:441px" width="15" height="13"><rect width="15" height="13" fill="#000"/><rect x="1" y="1" width="6" height="11" fill="#e00000"/><rect x="7" y="1" width="1" height="11" fill="#000"/><rect x="8" y="1" width="6" height="11" fill="#ff00ff"/></svg>
<svg class="a" style="left:1238px;top:441px" width="15" height="13"><rect width="15" height="13" fill="#000"/><rect x="1" y="1" width="13" height="5" fill="#ff00ff"/><rect x="1" y="6" width="13" height="1" fill="#000"/><rect x="1" y="7" width="13" height="5" fill="#e00000"/></svg>
<svg class="a" style="left:1258px;top:441px" width="15" height="13"><rect width="15" height="13" fill="#000"/><rect x="1" y="1" width="13" height="11" fill="#e00000"/></svg><div class="a" style="left:0;top:263px;width:112px;height:236px;background:linear-gradient(90deg,#f0b8d4,#f4c8dc 40%,#e8b0cc 70%,#f0c0d8);border:1px solid #5a3048;border-left:none"></div>
<div class="a" style="left:0;top:264px;width:111px;height:22px;background:radial-gradient(ellipse at 45% 75%,#d898b8 0%,#eab4d0 35%,#f6cce0 70%,#f2c4da 100%)"></div>
<div class="a" style="left:90px;top:268px;width:16px;height:16px;border:1px solid #8a6070;border-radius:3px;background:linear-gradient(#f8d8e8,#e0b0c8)"></div>
<svg class="a" style="left:93px;top:271px" width="10" height="10"><path d="M2 2 L8 8 M8 2 L2 8" stroke="#fff" stroke-width="2.6"/><path d="M2 2 L8 8 M8 2 L2 8" stroke="#a08090" stroke-width="1" opacity=".6"/></svg>
<div class="a" style="left:0;top:286px;width:107px;height:207px;background:#ffccff;border:1px solid #000;border-left:none;border-top:1px solid #000"></div>
<div class="b" style="left:0px;top:287px;width:32px;height:17px;line-height:14px;text-align:left;padding-left:1px">New</div>
<div class="b" style="left:32px;top:287px;width:40px;height:17px;line-height:14px;">Clone</div>
<div class="b" style="left:72px;top:287px;width:33px;height:17px;line-height:14px;text-align:left;padding-left:2px">Delete</div>
<div class="b" style="left:0px;top:304px;width:32px;height:17px;line-height:14px;text-align:left;padding-left:1px">Prop</div>
<div class="b" style="left:32px;top:304px;width:20px;height:17px;line-height:14px;">&lt;</div>
<div class="b" style="left:52px;top:304px;width:20px;height:17px;line-height:14px;">&gt;</div>
<div class="b" style="left:72px;top:304px;width:33px;height:17px;line-height:14px;text-align:right;padding-right:1px">Misc</div>
<div class="a" style="left:0;top:320px;width:105px;height:2px;background:#c050c0"></div>
<div class="a" style="left:0;top:322px;width:38px;height:120px;background:#ffccff"></div>
<div class="a" style="left:38px;top:322px;width:64px;height:167px;background:#9c9cf8"></div>
<div class="a" style="left:0;top:442px;width:38px;height:47px;background:#9c9cf8"></div>
<div class="a" style="left:102px;top:322px;width:3px;height:170px;background:#fff"></div>
<div class="a" style="left:0;top:489px;width:105px;height:3px;background:#fff"></div>
<div class="a" style="left:0;top:492px;width:106px;height:1px;background:#000"></div>
<div class="a" style="left:105px;top:286px;width:1px;height:207px;background:#000"></div>
<div class="a" style="left:38px;top:322px;width:64px;height:20px;background:#3898f0"></div>
<div class="a" style="left:0;top:324px;width:13px;height:17px;background:#fff;border-right:1px solid #000;border-bottom:1px solid #000"></div>
<svg class="a" style="left:0;top:325px" width="12" height="14"><path d="M0 5 Q5 0 11 4" stroke="#000" stroke-width="1" fill="none"/><ellipse cx="5" cy="8" rx="3.2" ry="4" fill="#111"/><circle cx="4.5" cy="7" r="1" fill="#ddd"/></svg>
<div class="a" style="left:18px;top:324px;width:18px;height:17px;background:#fff;border-right:1px solid #000;border-bottom:1px solid #000"></div>
<svg class="a" style="left:20px;top:325px" width="14" height="14"><path d="M7 1 V10 M7 3 H10 M7 5 H9 M7 7 H10" stroke="#000" stroke-width="1.4" fill="none"/><ellipse cx="7" cy="12" rx="3.5" ry="1.6" fill="none" stroke="#000" stroke-width="1.2"/></svg>
<svg class="a" style="left:46px;top:328px" width="6" height="9"><path d="M0 0 L5 4.5 L0 9 Z" fill="#e8ecff"/></svg>
<div class="t" style="left:57px;top:326px;color:#e8f0ff;font-size:12px">obj1</div>
<div class="a" style="left:0;top:344px;width:13px;height:17px;background:#fff;border-right:1px solid #000;border-bottom:1px solid #000"></div>
<svg class="a" style="left:0;top:345px" width="12" height="14"><path d="M0 5 Q5 0 11 4" stroke="#000" stroke-width="1" fill="none"/><ellipse cx="5" cy="8" rx="3.2" ry="4" fill="#111"/><circle cx="4.5" cy="7" r="1" fill="#ddd"/></svg>
<div class="a" style="left:18px;top:344px;width:18px;height:17px;background:#fff;border-right:1px solid #000;border-bottom:1px solid #000"></div>
<svg class="a" style="left:20px;top:345px" width="14" height="14"><path d="M7 1 V10 M7 3 H10 M7 5 H9 M7 7 H10" stroke="#000" stroke-width="1.4" fill="none"/><ellipse cx="7" cy="12" rx="3.5" ry="1.6" fill="none" stroke="#000" stroke-width="1.2"/></svg>
<svg class="a" style="left:46px;top:348px" width="6" height="9"><path d="M0 0 L5 4.5 L0 9 Z" fill="#e8ecff"/></svg>
<div class="t" style="left:57px;top:346px;color:#101030;font-size:12px">obj2</div>
<div class="a" style="left:0;top:364px;width:13px;height:17px;background:#fff;border-right:1px solid #000;border-bottom:1px solid #000"></div>
<svg class="a" style="left:0;top:365px" width="12" height="14"><path d="M0 5 Q5 0 11 4" stroke="#000" stroke-width="1" fill="none"/><ellipse cx="5" cy="8" rx="3.2" ry="4" fill="#111"/><circle cx="4.5" cy="7" r="1" fill="#ddd"/></svg>
<div class="a" style="left:18px;top:364px;width:18px;height:17px;background:#fff;border-right:1px solid #000;border-bottom:1px solid #000"></div>
<svg class="a" style="left:20px;top:365px" width="14" height="14"><path d="M7 1 V10 M7 3 H10 M7 5 H9 M7 7 H10" stroke="#000" stroke-width="1.4" fill="none"/><ellipse cx="7" cy="12" rx="3.5" ry="1.6" fill="none" stroke="#000" stroke-width="1.2"/></svg>
<svg class="a" style="left:46px;top:368px" width="6" height="9"><path d="M0 0 L5 4.5 L0 9 Z" fill="#e8ecff"/></svg>
<div class="t" style="left:57px;top:366px;color:#101030;font-size:12px">obj3</div>
<div class="a" style="left:0;top:384px;width:13px;height:17px;background:#fff;border-right:1px solid #000;border-bottom:1px solid #000"></div>
<svg class="a" style="left:0;top:385px" width="12" height="14"><path d="M0 5 Q5 0 11 4" stroke="#000" stroke-width="1" fill="none"/><ellipse cx="5" cy="8" rx="3.2" ry="4" fill="#111"/><circle cx="4.5" cy="7" r="1" fill="#ddd"/></svg>
<div class="a" style="left:18px;top:384px;width:18px;height:17px;background:#fff;border-right:1px solid #000;border-bottom:1px solid #000"></div>
<svg class="a" style="left:20px;top:385px" width="14" height="14"><path d="M7 1 V10 M7 3 H10 M7 5 H9 M7 7 H10" stroke="#000" stroke-width="1.4" fill="none"/><ellipse cx="7" cy="12" rx="3.5" ry="1.6" fill="none" stroke="#000" stroke-width="1.2"/></svg>
<svg class="a" style="left:44px;top:390px" width="9" height="6"><path d="M0 0 L9 0 L4.5 5 Z" fill="#e8ecff"/></svg>
<div class="t" style="left:57px;top:386px;color:#101030;font-size:12px">obj4</div>
<div class="a" style="left:0;top:404px;width:13px;height:17px;background:#fff;border-right:1px solid #000;border-bottom:1px solid #000"></div>
<svg class="a" style="left:0;top:405px" width="12" height="14"><path d="M0 5 Q5 0 11 4" stroke="#000" stroke-width="1" fill="none"/><ellipse cx="5" cy="8" rx="3.2" ry="4" fill="#111"/><circle cx="4.5" cy="7" r="1" fill="#ddd"/></svg>
<div class="a" style="left:18px;top:404px;width:18px;height:17px;background:#fff;border-right:1px solid #000;border-bottom:1px solid #000"></div>
<svg class="a" style="left:20px;top:405px" width="14" height="14"><path d="M7 1 V10 M7 3 H10 M7 5 H9 M7 7 H10" stroke="#000" stroke-width="1.4" fill="none"/><ellipse cx="7" cy="12" rx="3.5" ry="1.6" fill="none" stroke="#000" stroke-width="1.2"/></svg>
<svg class="a" style="left:44px;top:410px" width="9" height="6"><path d="M0 0 L9 0 L4.5 5 Z" fill="#e8ecff"/></svg>
<div class="t" style="left:57px;top:406px;color:#101030;font-size:12px">obj5</div>
<div class="a" style="left:0;top:424px;width:13px;height:17px;background:#fff;border-right:1px solid #000;border-bottom:1px solid #000"></div>
<svg class="a" style="left:0;top:425px" width="12" height="14"><path d="M0 5 Q5 0 11 4" stroke="#000" stroke-width="1" fill="none"/><ellipse cx="5" cy="8" rx="3.2" ry="4" fill="#111"/><circle cx="4.5" cy="7" r="1" fill="#ddd"/></svg>
<div class="a" style="left:18px;top:424px;width:18px;height:17px;background:#fff;border-right:1px solid #000;border-bottom:1px solid #000"></div>
<svg class="a" style="left:44px;top:430px" width="9" height="6"><path d="M0 0 L9 0 L4.5 5 Z" fill="#e8ecff"/></svg>
<div class="t" style="left:57px;top:426px;color:#101030;font-size:12px">obj6</div>
<div class="a" style="left:36px;top:551px;width:86px;height:125px;background:#ffd0ff;border:1px solid #707080"></div>
<div class="a" style="left:37px;top:552px;width:84px;height:20px;background:linear-gradient(#a8bcc4,#c8d8e0 60%,#d4e2ea)"></div>
<div class="t" style="left:40px;top:556px;color:#405058;font-size:12px">Select</div>
<div class="b bp" style="left:47px;top:580px;width:63px;height:16px;line-height:13px">Normal</div>
<div class="b" style="left:47px;top:597px;width:63px;height:17px;line-height:14px">Joined face</div>
<div class="b" style="left:47px;top:614px;width:63px;height:17px;line-height:14px">Belt</div>
<div class="b" style="left:47px;top:631px;width:63px;height:17px;line-height:14px">CurObj</div>
<div class="b" style="left:47px;top:648px;width:63px;height:17px;line-height:14px">Brush</div>
</body></html>
